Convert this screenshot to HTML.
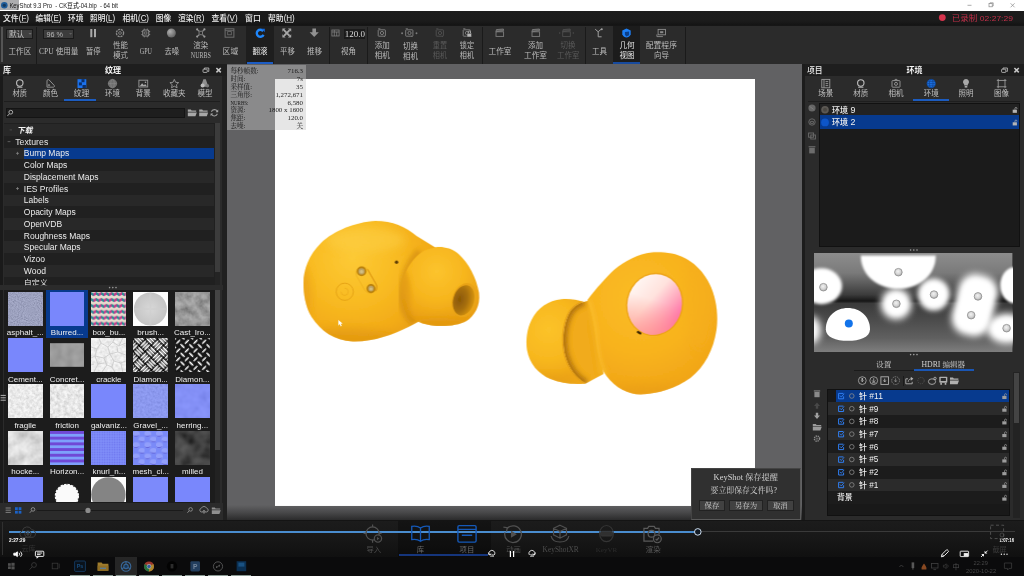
<!DOCTYPE html>
<html lang="zh"><head><meta charset="utf-8"><title>KeyShot 9.3 Pro - CK-04.bip - 64 bit</title>
<style>
html,body{margin:0;padding:0;background:#2b2b2b;}
body{width:1024px;height:576px;overflow:hidden;position:relative;font-family:"Liberation Sans",sans-serif;}
#app{position:absolute;left:0;top:0;width:1024px;height:576px;overflow:hidden;}
#app div{position:absolute;}
#app .thumbgrid div{position:absolute;overflow:hidden;}
#tl span{position:absolute;display:block;color:transparent;white-space:pre;line-height:1;overflow:hidden;}
#ov{position:absolute;left:0;top:0;width:1024px;height:576px;pointer-events:none;filter:blur(0.35px);}
</style></head>
<body>
<div id="app">
<div class="titlebar" style="left:0px;top:0px;width:1024px;height:10.6px;background:#ffffff;"></div>
<div style="left:0px;top:0px;width:18.6px;height:10.3px;background:rgba(112,114,118,0.58);"></div>
<div class="menubar" style="left:0px;top:10.6px;width:1024px;height:14.2px;background:linear-gradient(to bottom,#1c1c1c 0%,#1b1b1b 70%,#141414 100%);"></div>
<div class="toolbar" style="left:0px;top:24.8px;width:1024px;height:39.6px;background:#2b2b2b;"></div>
<div style="left:0px;top:24.8px;width:1024px;height:0.8px;background:#161616;"></div>
<div style="left:1px;top:27px;width:2px;height:35px;background:#555;"></div>
<div style="left:245.8px;top:25.6px;width:27.8px;height:38.8px;background:#1e1e1e;"></div>
<div style="left:246.6px;top:61.8px;width:26.6px;height:2.2px;background:#1c5cc4;"></div>
<div style="left:612.8px;top:25.6px;width:27.4px;height:38.8px;background:#1c1c1c;"></div>
<div style="left:612.8px;top:61.8px;width:27.4px;height:2.2px;background:#174a9e;"></div>
<div style="left:36px;top:26.5px;width:0.8px;height:37px;background:#1a1a1a;"></div>
<div style="left:329px;top:26.5px;width:0.8px;height:37px;background:#1a1a1a;"></div>
<div style="left:367px;top:26.5px;width:0.8px;height:37px;background:#1a1a1a;"></div>
<div style="left:481.8px;top:26.5px;width:0.8px;height:37px;background:#1a1a1a;"></div>
<div style="left:584.5px;top:26.5px;width:0.8px;height:37px;background:#1a1a1a;"></div>
<div style="left:684.5px;top:26.5px;width:0.8px;height:37px;background:#1a1a1a;"></div>
<div style="left:6.2px;top:28.6px;width:27.2px;height:10.4px;background:#404040;border:0.6px solid #1a1a1a;box-sizing:border-box;"></div>
<div style="left:42.6px;top:28.6px;width:31.4px;height:10.4px;background:#3c3c3c;border:0.6px solid #1a1a1a;box-sizing:border-box;"></div>
<div style="left:343.6px;top:28.6px;width:21.6px;height:10.4px;background:#1a1a1a;"></div>
<div style="left:0px;top:63.7px;width:1024px;height:0.9px;background:#1c1c1c;"></div>
<div class="panel-left" style="left:0px;top:64.4px;width:226.6px;height:455.6px;background:#2b2b2b;"></div>
<div style="left:0px;top:64.4px;width:3px;height:455.6px;background:#1a1a1a;"></div>
<div style="left:222.4px;top:64.4px;width:4.2px;height:455.6px;background:#202020;"></div>
<div class="panel-head" style="left:0px;top:64.4px;width:226.6px;height:11.8px;background:#1e1e1e;"></div>
<div style="left:4px;top:100.6px;width:216px;height:0.7px;background:#1e1e1e;"></div>
<div style="left:64.4px;top:99px;width:31.8px;height:1.6px;background:#1c5cc0;"></div>
<div style="left:5.6px;top:107.6px;width:179.6px;height:10.6px;background:#1e1e1e;border:0.6px solid #141414;box-sizing:border-box;"></div>
<div class="tree" style="left:4.4px;top:122.6px;width:216px;height:162.6px;background:#202020;"></div>
<div style="left:4.4px;top:124.15px;width:210px;height:11.72px;background:#282828;"></div>
<div style="left:4.4px;top:135.88px;width:210px;height:11.72px;background:#202020;"></div>
<div style="left:4.4px;top:147.6px;width:210px;height:11.72px;background:#282828;"></div>
<div style="left:23.6px;top:147.6px;width:190.2px;height:11.72px;background:#073a8e;"></div>
<div style="left:4.4px;top:159.32px;width:210px;height:11.72px;background:#202020;"></div>
<div style="left:4.4px;top:171.05px;width:210px;height:11.72px;background:#282828;"></div>
<div style="left:4.4px;top:182.78px;width:210px;height:11.72px;background:#202020;"></div>
<div style="left:4.4px;top:194.5px;width:210px;height:11.72px;background:#282828;"></div>
<div style="left:4.4px;top:206.23px;width:210px;height:11.72px;background:#202020;"></div>
<div style="left:4.4px;top:217.95px;width:210px;height:11.72px;background:#282828;"></div>
<div style="left:4.4px;top:229.68px;width:210px;height:11.72px;background:#202020;"></div>
<div style="left:4.4px;top:241.4px;width:210px;height:11.72px;background:#282828;"></div>
<div style="left:4.4px;top:253.12px;width:210px;height:11.72px;background:#202020;"></div>
<div style="left:4.4px;top:264.85px;width:210px;height:11.72px;background:#282828;"></div>
<div style="left:4.4px;top:276.57px;width:210px;height:8.43px;background:#202020;"></div>
<div style="left:214.6px;top:123px;width:5.4px;height:162px;background:#242424;"></div>
<div style="left:215px;top:123.4px;width:4.6px;height:149px;background:#3c3c3c;"></div>
<div style="left:0px;top:285.2px;width:222.6px;height:5px;background:#2b2b2b;"></div>
<div class="thumbs" style="left:4.4px;top:289.6px;width:216px;height:213.6px;background:#1c1c1c;overflow:hidden;"></div>
<div style="left:214.6px;top:290px;width:5.4px;height:213px;background:#222;"></div>
<div style="left:215px;top:290.4px;width:4.6px;height:159.6px;background:#444;"></div>
<div style="left:46px;top:290px;width:42.4px;height:48px;background:#073a8e;"></div>
<div class="thumbgrid" style="left:4.4px;top:289.6px;width:210px;height:212.5px;overflow:hidden;"><div style="left:3.5px;top:2.1px;width:34.8px;height:34px;"><svg width="34.8" height="34" viewBox="0 0 35 34" preserveAspectRatio="none" style="display:block;background:#8c93bd"><filter id="nzA" x="0" y="0" width="100%" height="100%"><feTurbulence type="fractalNoise" baseFrequency="0.95" numOctaves="2" seed="4" result="t"/><feColorMatrix in="t" type="matrix" values="1.1 0 0 0 0  1.1 0 0 0 0  1.1 0 0 0 0  0 0 0 0 1"/></filter><rect x="0" y="0" width="35" height="34" fill="#8c93bd"/><rect x="0" y="0" width="35" height="34" filter="url(#nzA)" opacity="0.3"/></svg></div><div style="left:45.3px;top:2.1px;width:34.8px;height:34px;background:#7987fc;"></div><div style="left:87.1px;top:2.1px;width:34.8px;height:34px;"><svg width="34.8" height="34" viewBox="0 0 35 34" preserveAspectRatio="none" style="display:block;background:#cbb"><pattern id="pbox" width="7" height="8" patternUnits="userSpaceOnUse" patternTransform="scale(0.74)"><rect width="7" height="8" fill="#d8c9c0"/><path d="M0 0l3.5 2v4L0 4z" fill="#2d8a94"/><path d="M3.5 2L7 0v4L3.5 6z" fill="#c43a8a"/><path d="M0 4l3.5 2L7 4v4H0z" fill="#e9dccf"/></pattern><rect width="35" height="34" fill="url(#pbox)"/></svg></div><div style="left:128.9px;top:2.1px;width:34.8px;height:34px;"><svg width="34.8" height="34" viewBox="0 0 35 34" preserveAspectRatio="none" style="display:block;background:#fdfdfd"><defs><radialGradient id="gbr"><stop offset="0" stop-color="#d8d8d8"/><stop offset="1" stop-color="#c4c4c4"/></radialGradient></defs><circle cx="17.5" cy="17" r="16.6" fill="url(#gbr)"/><path d="M17.5 17L17.5 0.4M17.5 17L34 17M17.5 17L1 17M17.5 17V33.6" stroke="#cfcfcf" stroke-width="2" opacity="0.6"/></svg></div><div style="left:170.6px;top:2.1px;width:34.8px;height:34px;"><svg width="34.8" height="34" viewBox="0 0 35 34" preserveAspectRatio="none" style="display:block;background:#767676"><filter id="nzC" x="0" y="0" width="100%" height="100%"><feTurbulence type="fractalNoise" baseFrequency="0.13" numOctaves="3" seed="2" result="t"/><feColorMatrix in="t" type="matrix" values="0.8 0 0 0 0.06  0.8 0 0 0 0.06  0.8 0 0 0 0.06  0 0 0 0 1"/></filter><rect x="0" y="0" width="35" height="34" fill="#767676"/><rect x="0" y="0" width="35" height="34" filter="url(#nzC)" opacity="0.55"/></svg></div><div style="left:3.5px;top:48.5px;width:34.8px;height:34px;background:#7987fc;"></div><div style="left:45.3px;top:48.5px;width:34.8px;height:34px;"><svg width="34.8" height="34" viewBox="0 0 35 34" preserveAspectRatio="none" style="display:block;background:#1c1c1c"><filter id="nzK" x="0" y="0" width="100%" height="100%"><feTurbulence type="fractalNoise" baseFrequency="0.09" numOctaves="2" seed="6" result="t"/><feColorMatrix in="t" type="matrix" values="0.5 0 0 0 0.23  0.5 0 0 0 0.23  0.5 0 0 0 0.23  0 0 0 0 1"/></filter><rect x="0" y="5.4" width="35" height="23.2" fill="#828282"/><rect x="0" y="5.4" width="35" height="23.2" filter="url(#nzK)" opacity="0.45"/></svg></div><div style="left:87.1px;top:48.5px;width:34.8px;height:34px;"><svg width="34.8" height="34" viewBox="0 0 35 34" preserveAspectRatio="none" style="display:block;background:#f4f4f4"><filter id="nzX" x="0" y="0" width="100%" height="100%"><feTurbulence type="fractalNoise" baseFrequency="0.3" numOctaves="2" seed="8" result="t"/><feColorMatrix in="t" type="matrix" values="1 0 0 0 0.25  1 0 0 0 0.25  1 0 0 0 0.25  0 0 0 0 1"/></filter><rect x="0" y="0" width="35" height="34" fill="#f4f4f4"/><rect x="0" y="0" width="35" height="34" filter="url(#nzX)" opacity="0.35"/><path d="M0 9l6 2l4 -6l7 4l5 -5l6 4l7 -3M6 11l-2 7l-4 2M10 5l-2 -5M17 9l2 7l-6 4l-9 -2M19 16l8 -2l8 3M13 20l3 7l-5 7M4 18l3 8l-4 8M19 16l4 7l7 2l5 -2M23 23l-2 6l3 5M16 27l5 2M27 14l-1 -6M30 25l2 9M7 26l6 -1M22 4l2 -4M28 8l4 -8M0 27l3 -1" stroke="#c2c2c2" stroke-width="0.7" fill="none"/></svg></div><div style="left:128.9px;top:48.5px;width:34.8px;height:34px;"><svg width="34.8" height="34" viewBox="0 0 35 34" preserveAspectRatio="none" style="display:block;background:#080808"><pattern id="pd1" width="17.4" height="17.4" patternUnits="userSpaceOnUse" patternTransform="rotate(45 17 17) translate(2.5 0.5)"><rect width="18" height="18" fill="#080808"/><g fill="#ffffff"><ellipse cx="4.35" cy="1.65" rx="4.1" ry="0.98"/><ellipse cx="4.35" cy="4.35" rx="4.1" ry="0.98"/><ellipse cx="4.35" cy="7.05" rx="4.1" ry="0.98"/><ellipse cx="10.35" cy="4.35" rx="0.98" ry="4.1"/><ellipse cx="13.05" cy="4.35" rx="0.98" ry="4.1"/><ellipse cx="15.75" cy="4.35" rx="0.98" ry="4.1"/><ellipse cx="13.05" cy="10.35" rx="4.1" ry="0.98"/><ellipse cx="13.05" cy="13.05" rx="4.1" ry="0.98"/><ellipse cx="13.05" cy="15.75" rx="4.1" ry="0.98"/><ellipse cx="1.65" cy="13.05" rx="0.98" ry="4.1"/><ellipse cx="4.35" cy="13.05" rx="0.98" ry="4.1"/><ellipse cx="7.05" cy="13.05" rx="0.98" ry="4.1"/></g></pattern><rect width="35" height="34" fill="url(#pd1)"/></svg></div><div style="left:170.6px;top:48.5px;width:34.8px;height:34px;"><svg width="34.8" height="34" viewBox="0 0 35 34" preserveAspectRatio="none" style="display:block;background:#161616"><pattern id="pd2" width="12.3" height="12.3" patternUnits="userSpaceOnUse" patternTransform="rotate(45 17 17) translate(1 2)"><rect width="13" height="13" fill="#161616"/><g fill="#f2f2f2"><ellipse cx="3.08" cy="3.08" rx="3.1" ry="0.85"/><ellipse cx="9.23" cy="9.23" rx="3.1" ry="0.85"/><ellipse cx="9.23" cy="3.08" rx="0.85" ry="3.1"/><ellipse cx="3.08" cy="9.23" rx="0.85" ry="3.1"/></g></pattern><rect width="35" height="34" fill="url(#pd2)"/></svg></div><div style="left:3.5px;top:94.8px;width:34.8px;height:34px;"><svg width="34.8" height="34" viewBox="0 0 35 34" preserveAspectRatio="none" style="display:block;background:#f0f0f0"><filter id="nzF" x="0" y="0" width="100%" height="100%"><feTurbulence type="fractalNoise" baseFrequency="0.32" numOctaves="3" seed="7" result="t"/><feColorMatrix in="t" type="matrix" values="0.9 0 0 0 0.33  0.9 0 0 0 0.33  0.9 0 0 0 0.33  0 0 0 0 1"/></filter><rect x="0" y="0" width="35" height="34" fill="#f0f0f0"/><rect x="0" y="0" width="35" height="34" filter="url(#nzF)" opacity="0.5"/></svg></div><div style="left:45.3px;top:94.8px;width:34.8px;height:34px;"><svg width="34.8" height="34" viewBox="0 0 35 34" preserveAspectRatio="none" style="display:block;background:#eeeeee"><filter id="nzR" x="0" y="0" width="100%" height="100%"><feTurbulence type="fractalNoise" baseFrequency="0.28" numOctaves="3" seed="12" result="t"/><feColorMatrix in="t" type="matrix" values="1 0 0 0 0.26  1 0 0 0 0.26  1 0 0 0 0.26  0 0 0 0 1"/></filter><rect x="0" y="0" width="35" height="34" fill="#eeeeee"/><rect x="0" y="0" width="35" height="34" filter="url(#nzR)" opacity="0.5"/></svg></div><div style="left:87.1px;top:94.8px;width:34.8px;height:34px;background:#7987fc;"></div><div style="left:128.9px;top:94.8px;width:34.8px;height:34px;"><svg width="34.8" height="34" viewBox="0 0 35 34" preserveAspectRatio="none" style="display:block;background:#7c8cf8"><filter id="nzG" x="0" y="0" width="100%" height="100%"><feTurbulence type="fractalNoise" baseFrequency="0.4" numOctaves="2" seed="5" result="t"/><feColorMatrix in="t" type="matrix" values="1 0 0 0 0.1  1 0 0 0 0.1  1 0 0 0 0.1  0 0 0 0 1"/></filter><rect x="0" y="0" width="35" height="34" fill="#7c8cf8"/><rect x="0" y="0" width="35" height="34" filter="url(#nzG)" opacity="0.2"/></svg></div><div style="left:170.6px;top:94.8px;width:34.8px;height:34px;"><svg width="34.8" height="34" viewBox="0 0 35 34" preserveAspectRatio="none" style="display:block;background:#7987fc"><filter id="nzH" x="0" y="0" width="100%" height="100%"><feTurbulence type="fractalNoise" baseFrequency="0.12" numOctaves="2" seed="9" result="t"/><feColorMatrix in="t" type="matrix" values="1.2 0 0 0 0  1.2 0 0 0 0  1.2 0 0 0 0  0 0 0 0 1"/></filter><rect x="0" y="0" width="35" height="34" fill="#7987fc"/><rect x="0" y="0" width="35" height="34" filter="url(#nzH)" opacity="0.12"/></svg></div><div style="left:3.5px;top:141.2px;width:34.8px;height:34px;"><svg width="34.8" height="34" viewBox="0 0 35 34" preserveAspectRatio="none" style="display:block;background:#d6d6d6"><filter id="nzO" x="0" y="0" width="100%" height="100%"><feTurbulence type="fractalNoise" baseFrequency="0.085" numOctaves="3" seed="11" result="t"/><feColorMatrix in="t" type="matrix" values="0.9 0 0 0 0.27  0.9 0 0 0 0.27  0.9 0 0 0 0.27  0 0 0 0 1"/></filter><rect x="0" y="0" width="35" height="34" fill="#d6d6d6"/><rect x="0" y="0" width="35" height="34" filter="url(#nzO)" opacity="0.6"/></svg></div><div style="left:45.3px;top:141.2px;width:34.8px;height:34px;"><svg width="34.8" height="34" viewBox="0 0 35 34" preserveAspectRatio="none" style="display:block;background:#7ea0fb"><rect x="0" y="0" width="35" height="2.9" fill="#7048d6"/><rect x="0" y="5.7" width="35" height="2.9" fill="#7048d6"/><rect x="0" y="11.4" width="35" height="2.9" fill="#7048d6"/><rect x="0" y="17.1" width="35" height="2.9" fill="#7048d6"/><rect x="0" y="22.8" width="35" height="2.9" fill="#7048d6"/><rect x="0" y="28.5" width="35" height="2.9" fill="#7048d6"/></svg></div><div style="left:87.1px;top:141.2px;width:34.8px;height:34px;"><svg width="34.8" height="34" viewBox="0 0 35 34" preserveAspectRatio="none" style="display:block;background:#7686f5"><pattern id="pkn" width="2.5" height="2.5" patternUnits="userSpaceOnUse"><rect width="2.5" height="2.5" fill="#8494fb"/><rect x="0.5" y="0.5" width="1.6" height="1.6" fill="#6c74ee"/></pattern><rect width="35" height="34" fill="url(#pkn)"/></svg></div><div style="left:128.9px;top:141.2px;width:34.8px;height:34px;"><svg width="34.8" height="34" viewBox="0 0 35 34" preserveAspectRatio="none" style="display:block;background:#7a8af8"><pattern id="pme" width="11.6" height="11.3" patternUnits="userSpaceOnUse"><rect width="12" height="12" fill="#7a8af8"/><ellipse cx="3.2" cy="3" rx="3.6" ry="3" fill="#929ffb"/><path d="M-0.2 3.8a3.6 3 0 0 0 6.8 0a5 3 0 0 1 -6.8 0" fill="#6468dc"/><ellipse cx="9" cy="8.6" rx="3.6" ry="3" fill="#929ffb"/><path d="M5.6 9.4a3.6 3 0 0 0 6.8 0a5 3 0 0 1 -6.8 0" fill="#6468dc"/></pattern><rect width="35" height="34" fill="url(#pme)"/></svg></div><div style="left:170.6px;top:141.2px;width:34.8px;height:34px;"><svg width="34.8" height="34" viewBox="0 0 35 34" preserveAspectRatio="none" style="display:block;background:#1a1a1a"><filter id="nzM" x="0" y="0" width="100%" height="100%"><feTurbulence type="fractalNoise" baseFrequency="0.08" numOctaves="2" seed="3" result="t"/><feColorMatrix in="t" type="matrix" values="0.2 0 0 0 -0.03  0.2 0 0 0 -0.03  0.2 0 0 0 -0.03  0 0 0 0 1"/></filter><rect x="0" y="0" width="35" height="34" fill="#1a1a1a"/><rect x="0" y="0" width="35" height="34" filter="url(#nzM)" opacity="0.8"/></svg></div><div style="left:3.5px;top:187.6px;width:34.8px;height:34px;background:#7785fa;"></div><div style="left:45.3px;top:187.6px;width:34.8px;height:34px;"><svg width="34.8" height="34" viewBox="0 0 35 34" preserveAspectRatio="none" style="display:block;background:#1c1c1c"><circle cx="17" cy="19" r="11.4" fill="#fafafa" stroke="#fafafa" stroke-width="1.6" stroke-dasharray="2.4 1.2"/></svg></div><div style="left:87.1px;top:187.6px;width:34.8px;height:34px;"><svg width="34.8" height="34" viewBox="0 0 35 34" preserveAspectRatio="none" style="display:block;background:#fcfcfc"><circle cx="17.5" cy="17.6" r="17.3" fill="#848484"/></svg></div><div style="left:128.9px;top:187.6px;width:34.8px;height:34px;background:#7c8afb;"></div><div style="left:170.6px;top:187.6px;width:34.8px;height:34px;background:#7987fc;"></div></div>
<div style="left:0px;top:503.2px;width:222.6px;height:16.8px;background:#2b2b2b;"></div>
<div style="left:37px;top:510px;width:146px;height:0.8px;background:#1a1a1a;"></div>
<div class="viewport" style="left:226.6px;top:64.4px;width:575.4px;height:455.6px;background:#616163;"></div>
<div class="canvas" style="left:274.5px;top:79.1px;width:480.3px;height:426.9px;background:#fff;overflow:hidden;">
<svg width="480.3" height="426.9" viewBox="274.5 79.1 480.3 426.9" style="display:block">
<defs>
 <radialGradient id="gL1" gradientUnits="userSpaceOnUse" cx="352" cy="258" r="95">
  <stop offset="0" stop-color="#fdca36"/><stop offset="0.45" stop-color="#f9bc23"/><stop offset="0.8" stop-color="#f3ac18"/><stop offset="1" stop-color="#ea9f13"/></radialGradient>
 <radialGradient id="gL2" gradientUnits="userSpaceOnUse" cx="436" cy="272" r="52">
  <stop offset="0" stop-color="#fcc42e"/><stop offset="0.55" stop-color="#f7b61e"/><stop offset="1" stop-color="#ea9f13"/></radialGradient>
 <radialGradient id="gLh" cx="30%" cy="52%" r="75%">
  <stop offset="0" stop-color="#8a5806"/><stop offset="0.5" stop-color="#a8700a"/><stop offset="0.85" stop-color="#cf8e0e"/><stop offset="1" stop-color="#dc9a12"/></radialGradient>
 <radialGradient id="gR1" gradientUnits="userSpaceOnUse" cx="640" cy="300" r="100">
  <stop offset="0" stop-color="#fbbd25"/><stop offset="0.55" stop-color="#f8b31e"/><stop offset="1" stop-color="#f0a316"/></radialGradient>
 <radialGradient id="gR2" gradientUnits="userSpaceOnUse" cx="548" cy="330" r="50">
  <stop offset="0" stop-color="#fcc32a"/><stop offset="0.6" stop-color="#f8b81f"/><stop offset="1" stop-color="#efa716"/></radialGradient>
 <linearGradient id="gPink" gradientUnits="userSpaceOnUse" x1="630" y1="288" x2="683" y2="318">
  <stop offset="0" stop-color="#fff7f3"/><stop offset="0.38" stop-color="#ffe3de"/><stop offset="0.7" stop-color="#ffa2bb"/><stop offset="1" stop-color="#ff5ca4"/></linearGradient>
 <linearGradient id="gPink2" gradientUnits="userSpaceOnUse" x1="650" y1="275" x2="645" y2="336">
  <stop offset="0.4" stop-color="#ffa08a" stop-opacity="0"/><stop offset="1" stop-color="#ff9a90" stop-opacity="0.75"/></linearGradient>
 <linearGradient id="gFe" gradientUnits="userSpaceOnUse" x1="399" y1="300" x2="414" y2="296"><stop offset="0" stop-color="#000"/><stop offset="1" stop-color="#fff"/></linearGradient>
 <mask id="mLT" maskUnits="userSpaceOnUse" x="380" y="230" width="120" height="120"><rect x="380" y="230" width="120" height="120" fill="url(#gFe)"/></mask>
 <filter id="bl1" x="-20%" y="-20%" width="140%" height="140%"><feGaussianBlur stdDeviation="2.2"/></filter>
 <filter id="bl2" x="-20%" y="-20%" width="140%" height="140%"><feGaussianBlur stdDeviation="0.5"/></filter>
 <filter id="bl3" x="-30%" y="-30%" width="160%" height="160%"><feGaussianBlur stdDeviation="4"/></filter>
 <clipPath id="cpLB"><path id="pLB" d="M303 283C303 270 308 255 320.5 243C333 231 355 222 375 221C392 221 405 227 416 236L442 252L446 300C436 312 422 320 408 327C392 335 372 342 352 341.4C334 340.6 320 331 311 317C305 307 303 295 303 283Z"/></clipPath>
 <clipPath id="cpLT"><path id="pLT" d="M432.8 248C438 246 450 247 458 254C468 263 476 278 478.5 293C480 306 474 316 466 321C455 327 435 327.5 422 323.5C410 319.5 402 310 400.5 296C399.5 280 408 262 420 253C424 250 428 249 432.8 248Z"/></clipPath>
 <clipPath id="cpRB"><path id="pRB" d="M587 300C596 288 606 277 613.5 270C624 261 638 254 651 252.5C656 252 660 252.3 664 252.6C684 254 700 266 709 284C716 298 718 315 716 330C713 350 704 367 690 378C676 388 658 394 640 394.5C628 394.5 615 388 606 376C600 368 597 355 595.5 342C594 325 591 312 587 300Z"/></clipPath>
 <clipPath id="cpRT"><path id="pRT" d="M583.5 302C576 299.5 568 298.6 561 299.3C548 300.5 537 308 531 320C526.5 329 525 340 526.5 350C529 364 538 374 550 379C561 383.5 574 385 585.4 383.5C575 378 568 368 564.5 355C561 340 563 322 570 311C574 306 578 303.5 583.5 302Z"/></clipPath><path id="pRN" d="M583.5 302C578 303.5 574 306 570 311C563 322 561 340 564.5 355C568 368 575 378 585.4 383.5L603 374L598 340L590 300Z"/>
</defs>
<g filter="url(#bl2)">
 <!-- left earbud body -->
 <use href="#pLB" fill="url(#gL1)"/>
 <g clip-path="url(#cpLB)">
  <ellipse cx="345" cy="345" rx="60" ry="16" fill="#dc9210" opacity="0.55" filter="url(#bl3)"/>
  <ellipse cx="300" cy="295" rx="10" ry="30" fill="#e79c12" opacity="0.6" filter="url(#bl3)"/>
  <path d="M420 252C409 263 402.5 280 402.5 296C403 308 407 317 415 322" fill="none" stroke="#cc860c" stroke-width="10" opacity="0.55" filter="url(#bl1)"/>
  <ellipse cx="365" cy="240" rx="40" ry="12" fill="#fdd04a" opacity="0.5" filter="url(#bl3)"/>
 </g>
 <!-- sensor capsule -->
 <g transform="rotate(60 365.7 280)"><rect x="351.4" y="273.6" width="28.6" height="12.8" rx="6.4" fill="none" stroke="#e29c12" stroke-width="0.8" opacity="0.45"/><path d="M357 273.6h17a6.4 6.4 0 0 1 6 4" fill="none" stroke="#dc9510" stroke-width="1" opacity="0.9"/></g>
 <circle cx="361" cy="271.4" r="4" fill="#bca264" stroke="#b9800c" stroke-width="1.7"/><circle cx="361" cy="271.8" r="1.8" fill="#d4c084"/>
 <circle cx="370.4" cy="288.6" r="3.7" fill="#bca264" stroke="#b9800c" stroke-width="1.7"/><circle cx="370.4" cy="289" r="1.6" fill="#d4c084"/>
 <circle cx="344.2" cy="291.8" r="8.6" fill="none" stroke="#e3a014" stroke-width="0.9"/>
 <path d="M340.5 291.8a3.6 3.6 0 1 0 3.6 -3.6" fill="none" stroke="#eaa818" stroke-width="0.7"/>
 <circle cx="396" cy="262.3" r="1.7" fill="#5e3d06"/>
 <!-- left tip -->
 <g mask="url(#mLT)"><use href="#pLT" fill="url(#gL2)"/></g>
 <g clip-path="url(#cpLT)" mask="url(#mLT)">
  <ellipse cx="438" cy="330" rx="36" ry="12" fill="#df9510" opacity="0.6" filter="url(#bl3)"/>
  <ellipse cx="402" cy="296" rx="8" ry="26" fill="#dc9210" opacity="0.6" filter="url(#bl1)"/>
 </g>
 <g transform="rotate(16 464 300.2)"><ellipse cx="464" cy="300.2" rx="12.4" ry="17.4" fill="#eaa416"/><ellipse cx="463.2" cy="300.6" rx="10.4" ry="15.4" fill="url(#gLh)"/></g>
 <!-- right earbud tip -->
 <use href="#pRN" fill="#f1ab1a"/>
 <clipPath id="cpRN"><use href="#pRN"/></clipPath>
 <g clip-path="url(#cpRN)"><path d="M583.5 302C578 303.5 574 306 570 311C563 322 561 340 564.5 355C568 368 575 378 585.4 383.5" fill="none" stroke="#a86c08" stroke-width="8" opacity="0.85" filter="url(#bl1)"/>
 <path d="M590 300L598 340L603 374" fill="none" stroke="#f9ba24" stroke-width="8" opacity="0.6" filter="url(#bl1)"/></g>
 <use href="#pRT" fill="url(#gR2)"/>
 <g clip-path="url(#cpRT)">
  <ellipse cx="545" cy="384" rx="30" ry="9" fill="#e59e14" opacity="0.55" filter="url(#bl3)"/>
  <path d="M585.4 383.5C575 378 568 368 564.5 355C561 340 563 322 570 311C574 306 578 303.5 583.5 302" fill="none" stroke="#e39c13" stroke-width="2.4" opacity="0.9"/>
 </g>
 <!-- right earbud body -->
 <use href="#pRB" fill="url(#gR1)"/>
 <g clip-path="url(#cpRB)">
  <path d="M587 300C591 312 594 325 595.5 342C597 355 600 368 606 376" fill="none" stroke="#fdc63a" stroke-width="5" opacity="0.55" filter="url(#bl1)"/>
  <ellipse cx="650" cy="400" rx="60" ry="14" fill="#e89e14" opacity="0.6" filter="url(#bl3)"/>
  <ellipse cx="700" cy="300" rx="14" ry="50" fill="#f6ae1c" opacity="0.5" filter="url(#bl3)"/>
 </g>
 <!-- pink touch pad -->
 <g transform="rotate(12 654.2 304.4)">
  <ellipse cx="654.2" cy="304.4" rx="28.6" ry="31.8" fill="#eea417"/>
  <ellipse cx="654.2" cy="304.4" rx="27.2" ry="30.4" fill="url(#gPink)"/>
  <ellipse cx="654.2" cy="304.4" rx="27.2" ry="30.4" fill="url(#gPink2)"/>
 </g>
 <g transform="rotate(28 638.6 332.6)"><rect x="636.2" y="331.6" width="5" height="2.2" rx="1" fill="#3c2604"/></g>
</g>
<path d="M338 320.4l0 5l1.3 -1.2l1 2.1l0.8 -0.4l-1 -2.1l1.8 -0.1z" fill="#fff" stroke="#f0f0f0" stroke-width="0.3"/>
</svg></div>
<div style="left:226.6px;top:505px;width:575.4px;height:15px;background:linear-gradient(to bottom, rgba(30,30,30,0) 0%, rgba(26,26,26,0.35) 50%, rgba(22,22,22,0.72) 100%);"></div>
<div class="stats" style="left:227px;top:64.7px;width:78.8px;height:65px;background:rgba(196,196,196,0.42);"></div>
<div class="dialog" style="left:691.4px;top:468.4px;width:109.8px;height:51.2px;background:#303030;border:0.8px solid #5a5a5a;border-top-color:#444;border-left-color:#444;box-sizing:border-box;"></div>
<div style="left:698.6px;top:500px;width:26.6px;height:11.4px;background:#414141;border:0.6px solid #222;box-sizing:border-box;"></div>
<div style="left:729.2px;top:500px;width:33.8px;height:11.4px;background:#414141;border:0.6px solid #222;box-sizing:border-box;"></div>
<div style="left:767px;top:500px;width:26.6px;height:11.4px;background:#414141;border:0.6px solid #222;box-sizing:border-box;"></div>
<div class="panel-right" style="left:802px;top:64.4px;width:222px;height:455.6px;background:#2b2b2b;"></div>
<div style="left:802px;top:64.4px;width:3px;height:455.6px;background:#1c1c1c;"></div>
<div class="panel-head" style="left:804.6px;top:64.4px;width:219.4px;height:11.8px;background:#1e1e1e;"></div>
<div style="left:808px;top:100.6px;width:212px;height:0.7px;background:#1e1e1e;"></div>
<div style="left:912.6px;top:99px;width:36px;height:1.6px;background:#1c5cc0;"></div>
<div style="left:819.2px;top:103px;width:200.6px;height:144.4px;background:#1b1b1b;border:0.6px solid #111;box-sizing:border-box;"></div>
<div style="left:819.8px;top:103.6px;width:199.4px;height:11.8px;background:#222;"></div>
<div style="left:819.8px;top:115.4px;width:199.4px;height:13.6px;background:#073a8e;"></div>
<div class="hdri" style="left:814.2px;top:252.8px;width:198.4px;height:99px;overflow:hidden;"><svg width="198.4" height="99" viewBox="814.2 252.8 198.4 99" style="display:block">
<defs>
 <linearGradient id="hbg" x1="0" y1="0" x2="0" y2="1">
  <stop offset="0" stop-color="#8d8d8d"/><stop offset="0.2" stop-color="#7a7a7a"/><stop offset="0.42" stop-color="#3c3c3c"/><stop offset="0.485" stop-color="#161616"/>
  <stop offset="0.51" stop-color="#3a3a3a"/><stop offset="0.7" stop-color="#4e4e4e"/><stop offset="0.86" stop-color="#606060"/><stop offset="1" stop-color="#7e7e7e"/></linearGradient>
 <filter id="hb1" x="-30%" y="-30%" width="160%" height="160%"><feGaussianBlur stdDeviation="2.4"/></filter>
 <filter id="hb4" x="-30%" y="-30%" width="160%" height="160%"><feGaussianBlur stdDeviation="0.45"/></filter>
 <filter id="hb5" x="-30%" y="-30%" width="160%" height="160%"><feGaussianBlur stdDeviation="1.6"/></filter>
 <filter id="hb2" x="-30%" y="-30%" width="160%" height="160%"><feGaussianBlur stdDeviation="0.8"/></filter>
 <filter id="hb3" x="-30%" y="-30%" width="160%" height="160%"><feGaussianBlur stdDeviation="3.6"/></filter>
 <radialGradient id="pin" cx="45%" cy="40%" r="60%"><stop offset="0" stop-color="#f2f2f2"/><stop offset="0.6" stop-color="#d4d4d4"/><stop offset="1" stop-color="#aaa"/></radialGradient>
</defs>
<rect x="814.2" y="252.8" width="198.4" height="99" fill="url(#hbg)"/>
<g fill="#fff">
 <ellipse cx="821.6" cy="286" rx="20.6" ry="18" filter="url(#hb5)"/>
 <path d="M861 255.2H936C936 276 918 288.5 898.4 288.5C879 288.5 861 276 861 255.2Z" filter="url(#hb2)"/>
 <circle cx="896.4" cy="303.8" r="15.5" filter="url(#hb3)"/>
 <circle cx="896.4" cy="303.8" r="10" filter="url(#hb1)"/>
 <circle cx="934" cy="294.4" r="16" filter="url(#hb1)"/>
 <g transform="rotate(14 975 304.6)"><rect x="955" y="274" width="40" height="62" rx="17" filter="url(#hb3)"/><rect x="960" y="280" width="30" height="50" rx="13" filter="url(#hb1)"/></g>
 <ellipse cx="1015" cy="285" rx="14.5" ry="18" filter="url(#hb2)"/>
 <ellipse cx="1007" cy="328.4" rx="20" ry="15" filter="url(#hb3)"/>
 <ellipse cx="1007" cy="328.4" rx="13" ry="9.5" filter="url(#hb1)"/>
 <ellipse cx="811" cy="330" rx="10" ry="14" filter="url(#hb3)"/>
 <path d="M826 329C826 316 836 307.8 848 307.8C860 307.8 870.2 316 870.2 329C870.2 337 860 340.6 848 340.6C836 340.6 826 337 826 329Z" filter="url(#hb4)"/>
</g>
<g fill="url(#pin)" stroke="#8e8e8e" stroke-width="0.8">
 <circle cx="823.6" cy="287" r="3.8"/><circle cx="898.6" cy="272" r="3.8"/><circle cx="896.6" cy="303.6" r="3.8"/><circle cx="934.2" cy="294.4" r="3.8"/>
 <circle cx="978.2" cy="296.2" r="3.8"/><circle cx="971.4" cy="315" r="3.8"/><circle cx="1006.8" cy="328" r="3.8"/>
</g>
<circle cx="849" cy="323.4" r="4" fill="#1273ea"/>
</svg></div>
<div style="left:853.6px;top:369.8px;width:60.4px;height:0.7px;background:#1a1a1a;"></div>
<div style="left:913.8px;top:369.4px;width:60.2px;height:1.2px;background:#1a56b4;"></div>
<div style="left:902.6px;top:375.6px;width:0.7px;height:10.6px;background:#1a1a1a;"></div>
<div style="left:827.2px;top:388.8px;width:183px;height:127.6px;background:#191919;border:0.6px solid #111;box-sizing:border-box;"></div>
<div style="left:836px;top:389.65px;width:173.4px;height:12.7px;background:#073a8e;"></div>
<div style="left:828px;top:402.35px;width:181.4px;height:12.7px;background:#2b2b2b;"></div>
<div style="left:828px;top:415.05px;width:181.4px;height:12.7px;background:#1c1c1c;"></div>
<div style="left:828px;top:427.75px;width:181.4px;height:12.7px;background:#2b2b2b;"></div>
<div style="left:828px;top:440.45px;width:181.4px;height:12.7px;background:#1c1c1c;"></div>
<div style="left:828px;top:453.15px;width:181.4px;height:12.7px;background:#2b2b2b;"></div>
<div style="left:828px;top:465.85px;width:181.4px;height:12.7px;background:#1c1c1c;"></div>
<div style="left:828px;top:478.55px;width:181.4px;height:12.7px;background:#2b2b2b;"></div>
<div style="left:828px;top:491.25px;width:181.4px;height:12.7px;background:#1c1c1c;"></div>
<div style="left:1013.2px;top:372px;width:6.4px;height:146px;background:#232323;"></div>
<div style="left:1013.6px;top:373px;width:5.6px;height:50.4px;background:#444;"></div>
<div class="bottombar" style="left:0px;top:520px;width:1024px;height:37.4px;background:linear-gradient(to bottom,#1c1c1c 0%,#181818 45%,#101010 100%);"></div>
<div style="left:0px;top:520px;width:1024px;height:0.8px;background:#141414;"></div>
<div style="left:398px;top:520.8px;width:93.4px;height:36px;background:rgba(0,0,0,0.28);"></div>
<div style="left:1.6px;top:522.4px;width:1.3px;height:33px;background:#303030;"></div>
<div style="left:399px;top:554.2px;width:88.6px;height:1.9px;background:#15357c;"></div>
<div style="left:9px;top:531.3px;width:1006px;height:1.1px;background:#3a3a3a;"></div>
<div style="left:9px;top:530.9px;width:689px;height:1.9px;background:#4a8dcf;"></div>
<div class="taskbar" style="left:0px;top:556.8px;width:1024px;height:19.2px;background:#0b0b0c;"></div>
<div style="left:114.8px;top:556.8px;width:22.6px;height:19.2px;background:#262626;"></div>
<div style="left:70px;top:575.2px;width:20px;height:0.8px;background:#8a9a94;"></div>
<div style="left:93px;top:575.2px;width:20px;height:0.8px;background:#8a9a94;"></div>
<div style="left:116.2px;top:575.2px;width:20px;height:0.8px;background:#8a9a94;"></div>
<div style="left:139.2px;top:575.2px;width:20px;height:0.8px;background:#8a9a94;"></div>
<div style="left:162.2px;top:575.2px;width:20px;height:0.8px;background:#8a9a94;"></div>
<div style="left:185.2px;top:575.2px;width:20px;height:0.8px;background:#8a9a94;"></div>
<div style="left:208.2px;top:575.2px;width:20px;height:0.8px;background:#8a9a94;"></div>
<div style="left:231.2px;top:575.2px;width:20px;height:0.8px;background:#8a9a94;"></div>
<div id="tl" style="left:0;top:0;width:1024px;height:576px;overflow:hidden;"><span style="left:9.4px;top:2.35px;width:109.6px;height:7.3px;font-size:6.3px">KeyShot 9.3 Pro  - CK豆式-04.bip  - 64 bit</span><span style="left:3px;top:14px;width:27px;height:9px;font-size:8px">文件(F)</span><span style="left:35.6px;top:14px;width:26.7px;height:9px;font-size:8px">编辑(E)</span><span style="left:68px;top:14px;width:16.6px;height:9px;font-size:8px">环境</span><span style="left:90px;top:14px;width:26.2px;height:9px;font-size:8px">照明(L)</span><span style="left:122.6px;top:14px;width:27.4px;height:9px;font-size:8px">相机(C)</span><span style="left:155.7px;top:14px;width:16.7px;height:9px;font-size:8px">图像</span><span style="left:178px;top:14px;width:27.5px;height:9px;font-size:8px">渲染(R)</span><span style="left:211.4px;top:14px;width:27.2px;height:9px;font-size:8px">查看(V)</span><span style="left:245px;top:14px;width:16.8px;height:9px;font-size:8px">窗口</span><span style="left:268px;top:14px;width:27.8px;height:9px;font-size:8px">帮助(H)</span><span style="left:951.8px;top:13.8px;width:62.2px;height:9px;font-size:8px">已录制 02:27:29</span><span style="left:9px;top:30px;width:16.2px;height:8.6px;font-size:7.6px">默认</span><span style="left:8.5px;top:47px;width:23.7px;height:8.6px;font-size:7.6px">工作区</span><span style="left:39px;top:47px;width:40.5px;height:8.6px;font-size:7.6px">CPU 使用量</span><span style="left:86px;top:47px;width:15.6px;height:8.6px;font-size:7.6px">暂停</span><span style="left:113.2px;top:41.8px;width:15.8px;height:8.6px;font-size:7.6px">性能</span><span style="left:113.2px;top:51.4px;width:15.8px;height:8.6px;font-size:7.6px">模式</span><span style="left:164.5px;top:47px;width:15.5px;height:8.6px;font-size:7.6px">去噪</span><span style="left:193.3px;top:41.8px;width:16px;height:8.6px;font-size:7.6px">渲染</span><span style="left:222.6px;top:47px;width:16.6px;height:8.6px;font-size:7.6px">区域</span><span style="left:252.4px;top:47px;width:16px;height:8.6px;font-size:7.6px">翻滚</span><span style="left:280px;top:47px;width:15.8px;height:8.6px;font-size:7.6px">平移</span><span style="left:307px;top:47px;width:16.2px;height:8.6px;font-size:7.6px">推移</span><span style="left:341px;top:47px;width:16px;height:8.6px;font-size:7.6px">视角</span><span style="left:374.8px;top:41.8px;width:16px;height:8.6px;font-size:7.6px">添加</span><span style="left:374.8px;top:51.4px;width:16px;height:8.6px;font-size:7.6px">相机</span><span style="left:403px;top:42.6px;width:16px;height:8.6px;font-size:7.6px">切换</span><span style="left:403px;top:52.4px;width:16px;height:8.6px;font-size:7.6px">相机</span><span style="left:432.8px;top:41.8px;width:15.2px;height:8.6px;font-size:7.6px">重置</span><span style="left:432.8px;top:51.4px;width:15.2px;height:8.6px;font-size:7.6px">相机</span><span style="left:459.8px;top:41.8px;width:15.2px;height:8.6px;font-size:7.6px">锁定</span><span style="left:459.8px;top:51.4px;width:15.2px;height:8.6px;font-size:7.6px">相机</span><span style="left:488.5px;top:47px;width:24px;height:8.6px;font-size:7.6px">工作室</span><span style="left:528px;top:41.8px;width:16px;height:8.6px;font-size:7.6px">添加</span><span style="left:524px;top:51.4px;width:24px;height:8.6px;font-size:7.6px">工作室</span><span style="left:560.5px;top:41.8px;width:16px;height:8.6px;font-size:7.6px">切换</span><span style="left:557px;top:51.4px;width:23.5px;height:8.6px;font-size:7.6px">工作室</span><span style="left:592px;top:47px;width:16px;height:8.6px;font-size:7.6px">工具</span><span style="left:619.5px;top:41.8px;width:16px;height:8.6px;font-size:7.6px">几何</span><span style="left:619.5px;top:51.4px;width:16px;height:8.6px;font-size:7.6px">视图</span><span style="left:645.8px;top:41.8px;width:32.2px;height:8.6px;font-size:7.6px">配置程序</span><span style="left:654px;top:51.4px;width:16px;height:8.6px;font-size:7.6px">向导</span><span style="left:3px;top:66.6px;width:9px;height:9px;font-size:8px">库</span><span style="left:105px;top:66.6px;width:17px;height:9px;font-size:8px">纹理</span><span style="left:12.5px;top:89.8px;width:15.5px;height:8.6px;font-size:7.6px">材质</span><span style="left:43px;top:89.8px;width:16px;height:8.6px;font-size:7.6px">颜色</span><span style="left:73.8px;top:89.8px;width:16.6px;height:8.6px;font-size:7.6px">纹理</span><span style="left:105px;top:89.8px;width:16px;height:8.6px;font-size:7.6px">环境</span><span style="left:135.8px;top:89.8px;width:16px;height:8.6px;font-size:7.6px">背景</span><span style="left:163px;top:89.8px;width:23.6px;height:8.6px;font-size:7.6px">收藏夹</span><span style="left:197.5px;top:89.8px;width:16px;height:8.6px;font-size:7.6px">模型</span><span style="left:17px;top:126.01px;width:16.6px;height:8.8px;font-size:7.8px">下载</span><span style="left:23.8px;top:278.74px;width:25px;height:9px;font-size:8px">自定义</span><span style="left:230.4px;top:67.5px;width:29.18px;height:7.6px;font-size:6.6px">每秒帧数:</span><span style="left:230.4px;top:75.35px;width:15.98px;height:7.6px;font-size:6.6px">时间:</span><span style="left:230.4px;top:83.2px;width:22.58px;height:7.6px;font-size:6.6px">采样值:</span><span style="left:230.4px;top:91.05px;width:22.58px;height:7.6px;font-size:6.6px">三角形:</span><span style="left:230.4px;top:106.75px;width:15.98px;height:7.6px;font-size:6.6px">资源:</span><span style="left:230.4px;top:114.6px;width:15.98px;height:7.6px;font-size:6.6px">焦距:</span><span style="left:230.4px;top:122.45px;width:15.98px;height:7.6px;font-size:6.6px">去噪:</span><span style="left:296.4px;top:122.45px;width:7.6px;height:7.6px;font-size:6.6px">关</span><span style="left:713.6px;top:473.2px;width:65.4px;height:8.6px;font-size:7.6px">KeyShot 保存提醒</span><span style="left:710.6px;top:486.8px;width:67.4px;height:8.6px;font-size:7.6px">要立即保存文件吗?</span><span style="left:704.5px;top:502.1px;width:15.8px;height:8.4px;font-size:7.4px">保存</span><span style="left:735px;top:502.1px;width:23.2px;height:8.4px;font-size:7.4px">另存为</span><span style="left:772.9px;top:502.1px;width:15.8px;height:8.4px;font-size:7.4px">取消</span><span style="left:807px;top:66.7px;width:16.6px;height:8.8px;font-size:7.8px">项目</span><span style="left:906.4px;top:66.6px;width:17px;height:9px;font-size:8px">环境</span><span style="left:818.3px;top:89.8px;width:16px;height:8.6px;font-size:7.6px">场景</span><span style="left:853.3px;top:89.8px;width:16px;height:8.6px;font-size:7.6px">材质</span><span style="left:888.5px;top:89.8px;width:16px;height:8.6px;font-size:7.6px">相机</span><span style="left:923.7px;top:89.8px;width:16px;height:8.6px;font-size:7.6px">环境</span><span style="left:958.5px;top:89.8px;width:16px;height:8.6px;font-size:7.6px">照明</span><span style="left:994.1px;top:89.8px;width:16px;height:8.6px;font-size:7.6px">图像</span><span style="left:832px;top:105.7px;width:24.34px;height:9px;font-size:8px">环境 9</span><span style="left:832px;top:118.2px;width:24.34px;height:9px;font-size:8px">环境 2</span><span style="left:876px;top:360.5px;width:16.4px;height:8.4px;font-size:7.4px">设置</span><span style="left:921.4px;top:360.5px;width:44.8px;height:8.4px;font-size:7.4px">HDRI 编辑器</span><span style="left:859px;top:392px;width:24.96px;height:9px;font-size:8px">针 #11</span><span style="left:859px;top:404.7px;width:20.4px;height:9px;font-size:8px">针 #9</span><span style="left:859px;top:417.4px;width:20.4px;height:9px;font-size:8px">针 #8</span><span style="left:859px;top:430.1px;width:20.4px;height:9px;font-size:8px">针 #7</span><span style="left:859px;top:442.8px;width:20.4px;height:9px;font-size:8px">针 #6</span><span style="left:859px;top:455.5px;width:20.4px;height:9px;font-size:8px">针 #5</span><span style="left:859px;top:468.2px;width:20.4px;height:9px;font-size:8px">针 #2</span><span style="left:859px;top:480.9px;width:20.4px;height:9px;font-size:8px">针 #1</span><span style="left:837px;top:493.7px;width:16.6px;height:8.8px;font-size:7.8px">背景</span><span style="left:366.4px;top:545.3px;width:15.8px;height:8.4px;font-size:7.4px">导入</span><span style="left:416.8px;top:545.3px;width:8.4px;height:8.4px;font-size:7.4px">库</span><span style="left:459.6px;top:545.3px;width:15.8px;height:8.4px;font-size:7.4px">项目</span><span style="left:506.2px;top:545.3px;width:15.8px;height:8.4px;font-size:7.4px">动画</span><span style="left:645.8px;top:545.3px;width:15.8px;height:8.4px;font-size:7.4px">渲染</span><span style="left:21.4px;top:544.4px;width:15.4px;height:8.2px;font-size:7.2px">云库</span><span style="left:992.4px;top:545.4px;width:15.4px;height:8.2px;font-size:7.2px">截屏</span><span style="left:952.5px;top:562.9px;width:8px;height:8px;font-size:7px">中</span></div>
<svg id="ov" width="1024" height="576" viewBox="0 0 1024 576">
<circle cx="4.3" cy="5.3" r="3.3" fill="#1f5d9a"/><circle cx="4.3" cy="5.3" r="1.6" fill="#163a5e"/>
<g transform="translate(9.4 7.77) scale(0.931 1)" fill="#161616"><text x="0" y="0" font-family="Liberation Sans, sans-serif" font-size="6.3" textLength="61.98" lengthAdjust="spacingAndGlyphs" xml:space="preserve">KeyShot 9.3 Pro  - CK</text><text x="61.98" y="0" font-family="'Liberation Sans','Noto Sans CJK SC',sans-serif" font-size="6.3" font-weight="500">豆式</text><text x="74.58" y="0" font-family="Liberation Sans, sans-serif" font-size="6.3" textLength="42.02" lengthAdjust="spacingAndGlyphs" xml:space="preserve">-04.bip  - 64 bit</text></g>
<g stroke="#8a8a8a" stroke-width="0.7" fill="none"><path d="M967.5 5.3h4"/><rect x="989" y="3.6" width="3.2" height="3.2"/><path d="M990 3.6v-0.8h3.2v3.2h-1"/><path d="M1010.6 3.3l4 4m0-4l-4 4"/></g>
<g transform="translate(3 20.88) scale(0.982 1)" fill="#f0f0f0"><text x="0" y="0" font-family="'Liberation Sans','Noto Sans CJK SC',sans-serif" font-size="8" font-weight="500">文件</text><text x="16" y="0" font-family="Liberation Sans, sans-serif" font-size="8.2" textLength="10.47" lengthAdjust="spacingAndGlyphs" xml:space="preserve">(F)</text><rect x="18.73" y="0.98" width="5.01" height="0.65"/></g>
<g transform="translate(35.6 20.88) scale(0.954 1)" fill="#f0f0f0"><text x="0" y="0" font-family="'Liberation Sans','Noto Sans CJK SC',sans-serif" font-size="8" font-weight="500">编辑</text><text x="16" y="0" font-family="Liberation Sans, sans-serif" font-size="8.2" textLength="10.93" lengthAdjust="spacingAndGlyphs" xml:space="preserve">(E)</text><rect x="18.73" y="0.98" width="5.47" height="0.65"/></g>
<g transform="translate(68 20.88) scale(0.975 1)" fill="#f0f0f0"><text x="0" y="0" font-family="'Liberation Sans','Noto Sans CJK SC',sans-serif" font-size="8" font-weight="500">环境</text></g>
<g transform="translate(90 20.88) scale(0.968 1)" fill="#f0f0f0"><text x="0" y="0" font-family="'Liberation Sans','Noto Sans CJK SC',sans-serif" font-size="8" font-weight="500">照明</text><text x="16" y="0" font-family="Liberation Sans, sans-serif" font-size="8.2" textLength="10.02" lengthAdjust="spacingAndGlyphs" xml:space="preserve">(L)</text><rect x="18.73" y="0.98" width="4.56" height="0.65"/></g>
<g transform="translate(122.6 20.88) scale(0.964 1)" fill="#f0f0f0"><text x="0" y="0" font-family="'Liberation Sans','Noto Sans CJK SC',sans-serif" font-size="8" font-weight="500">相机</text><text x="16" y="0" font-family="Liberation Sans, sans-serif" font-size="8.2" textLength="11.38" lengthAdjust="spacingAndGlyphs" xml:space="preserve">(C)</text><rect x="18.73" y="0.98" width="5.92" height="0.65"/></g>
<g transform="translate(155.7 20.88) scale(0.981 1)" fill="#f0f0f0"><text x="0" y="0" font-family="'Liberation Sans','Noto Sans CJK SC',sans-serif" font-size="8" font-weight="500">图像</text></g>
<g transform="translate(178 20.88) scale(0.968 1)" fill="#f0f0f0"><text x="0" y="0" font-family="'Liberation Sans','Noto Sans CJK SC',sans-serif" font-size="8" font-weight="500">渲染</text><text x="16" y="0" font-family="Liberation Sans, sans-serif" font-size="8.2" textLength="11.38" lengthAdjust="spacingAndGlyphs" xml:space="preserve">(R)</text><rect x="18.73" y="0.98" width="5.92" height="0.65"/></g>
<g transform="translate(211.4 20.88) scale(0.973 1)" fill="#f0f0f0"><text x="0" y="0" font-family="'Liberation Sans','Noto Sans CJK SC',sans-serif" font-size="8" font-weight="500">查看</text><text x="16" y="0" font-family="Liberation Sans, sans-serif" font-size="8.2" textLength="10.93" lengthAdjust="spacingAndGlyphs" xml:space="preserve">(V)</text><rect x="18.73" y="0.98" width="5.47" height="0.65"/></g>
<g transform="translate(245 20.88) scale(0.988 1)" fill="#f0f0f0"><text x="0" y="0" font-family="'Liberation Sans','Noto Sans CJK SC',sans-serif" font-size="8" font-weight="500">窗口</text></g>
<g transform="translate(268 20.88) scale(0.979 1)" fill="#f0f0f0"><text x="0" y="0" font-family="'Liberation Sans','Noto Sans CJK SC',sans-serif" font-size="8" font-weight="500">帮助</text><text x="16" y="0" font-family="Liberation Sans, sans-serif" font-size="8.2" textLength="11.38" lengthAdjust="spacingAndGlyphs" xml:space="preserve">(H)</text><rect x="18.73" y="0.98" width="5.92" height="0.65"/></g>
<circle cx="942.3" cy="17.6" r="3.4" fill="#d6334c"/>
<g transform="translate(951.8 20.68) scale(1.067 1)" fill="#c22f49"><text x="0" y="0" font-family="'Liberation Sans','Noto Sans CJK SC',sans-serif" font-size="8">已录制</text><text x="24" y="0" font-family="Liberation Sans, sans-serif" font-size="8" textLength="33.36" lengthAdjust="spacingAndGlyphs" xml:space="preserve"> 02:27:29</text></g>
<g transform="translate(9 36.54)" fill="#bdbdbd"><text x="0" y="0" font-family="'Liberation Sans','Noto Sans CJK SC',sans-serif" font-size="7.6">默认</text></g>
<g transform="translate(46.5 36.56) scale(0.978 1)" fill="#b8b8b8"><text x="0" y="0" font-family="Liberation Sans, sans-serif" font-size="7.4" textLength="16.87" lengthAdjust="spacingAndGlyphs" xml:space="preserve">96 %</text></g>
<g transform="translate(344.8 36.64) scale(1.181 1)" fill="#dcdcdc"><text x="0" y="0" font-family="Liberation Serif, sans-serif" font-size="7.6" textLength="17.1" lengthAdjust="spacingAndGlyphs" xml:space="preserve">120.0</text></g>
<path d="M28.5 33l1.6 1.8 1.6-1.8z" fill="#707070"/><path d="M69 33l1.6 1.8 1.6-1.8z" fill="#606060"/>
<g transform="translate(8.5 53.54) scale(0.996 1)" fill="#bcbcbc"><text x="0" y="0" font-family="'Liberation Sans','Noto Sans CJK SC',sans-serif" font-size="7.6">工作区</text></g>
<g transform="translate(39 53.54) scale(1.000 1)" fill="#bcbcbc"><text x="0" y="0" font-family="Liberation Serif, sans-serif" font-size="7.6" textLength="16.68" lengthAdjust="spacingAndGlyphs" xml:space="preserve">CPU </text><text x="16.68" y="0" font-family="'Liberation Sans','Noto Sans CJK SC',sans-serif" font-size="7.6">使用量</text></g>
<g transform="translate(86 53.54) scale(0.961 1)" fill="#bcbcbc"><text x="0" y="0" font-family="'Liberation Sans','Noto Sans CJK SC',sans-serif" font-size="7.6">暂停</text></g>
<g transform="translate(113.2 48.34) scale(0.974 1)" fill="#bcbcbc"><text x="0" y="0" font-family="'Liberation Sans','Noto Sans CJK SC',sans-serif" font-size="7.6">性能</text></g>
<g transform="translate(113.2 57.94) scale(0.974 1)" fill="#bcbcbc"><text x="0" y="0" font-family="'Liberation Sans','Noto Sans CJK SC',sans-serif" font-size="7.6">模式</text></g>
<g transform="translate(139.8 53.54) scale(0.802 1)" fill="#bcbcbc"><text x="0" y="0" font-family="Liberation Serif, sans-serif" font-size="7.6" textLength="15.2" lengthAdjust="spacingAndGlyphs" xml:space="preserve">GPU</text></g>
<g transform="translate(164.5 53.54) scale(0.954 1)" fill="#bcbcbc"><text x="0" y="0" font-family="'Liberation Sans','Noto Sans CJK SC',sans-serif" font-size="7.6">去噪</text></g>
<g transform="translate(193.3 48.34) scale(0.987 1)" fill="#bcbcbc"><text x="0" y="0" font-family="'Liberation Sans','Noto Sans CJK SC',sans-serif" font-size="7.6">渲染</text></g>
<g transform="translate(190.8 57.94) scale(0.789 1)" fill="#bcbcbc"><text x="0" y="0" font-family="Liberation Serif, sans-serif" font-size="7.6" textLength="25.34" lengthAdjust="spacingAndGlyphs" xml:space="preserve">NURBS</text></g>
<g transform="translate(222.6 53.54) scale(1.026 1)" fill="#bcbcbc"><text x="0" y="0" font-family="'Liberation Sans','Noto Sans CJK SC',sans-serif" font-size="7.6">区域</text></g>
<g transform="translate(252.4 53.54) scale(0.987 1)" fill="#e8e8e8"><text x="0" y="0" font-family="'Liberation Sans','Noto Sans CJK SC',sans-serif" font-size="7.6">翻滚</text></g>
<g transform="translate(280 53.54) scale(0.974 1)" fill="#bcbcbc"><text x="0" y="0" font-family="'Liberation Sans','Noto Sans CJK SC',sans-serif" font-size="7.6">平移</text></g>
<g transform="translate(307 53.54) scale(1.000 1)" fill="#bcbcbc"><text x="0" y="0" font-family="'Liberation Sans','Noto Sans CJK SC',sans-serif" font-size="7.6">推移</text></g>
<g transform="translate(341 53.54) scale(0.987 1)" fill="#bcbcbc"><text x="0" y="0" font-family="'Liberation Sans','Noto Sans CJK SC',sans-serif" font-size="7.6">视角</text></g>
<g transform="translate(374.8 48.34) scale(0.987 1)" fill="#bcbcbc"><text x="0" y="0" font-family="'Liberation Sans','Noto Sans CJK SC',sans-serif" font-size="7.6">添加</text></g>
<g transform="translate(374.8 57.94) scale(0.987 1)" fill="#bcbcbc"><text x="0" y="0" font-family="'Liberation Sans','Noto Sans CJK SC',sans-serif" font-size="7.6">相机</text></g>
<g transform="translate(403 49.14) scale(0.987 1)" fill="#bcbcbc"><text x="0" y="0" font-family="'Liberation Sans','Noto Sans CJK SC',sans-serif" font-size="7.6">切换</text></g>
<g transform="translate(403 58.94) scale(0.987 1)" fill="#bcbcbc"><text x="0" y="0" font-family="'Liberation Sans','Noto Sans CJK SC',sans-serif" font-size="7.6">相机</text></g>
<g transform="translate(432.8 48.34) scale(0.934 1)" fill="#5a5a5a"><text x="0" y="0" font-family="'Liberation Sans','Noto Sans CJK SC',sans-serif" font-size="7.6">重置</text></g>
<g transform="translate(432.8 57.94) scale(0.934 1)" fill="#5a5a5a"><text x="0" y="0" font-family="'Liberation Sans','Noto Sans CJK SC',sans-serif" font-size="7.6">相机</text></g>
<g transform="translate(459.8 48.34) scale(0.934 1)" fill="#bcbcbc"><text x="0" y="0" font-family="'Liberation Sans','Noto Sans CJK SC',sans-serif" font-size="7.6">锁定</text></g>
<g transform="translate(459.8 57.94) scale(0.934 1)" fill="#bcbcbc"><text x="0" y="0" font-family="'Liberation Sans','Noto Sans CJK SC',sans-serif" font-size="7.6">相机</text></g>
<g transform="translate(488.5 53.54) scale(1.009 1)" fill="#bcbcbc"><text x="0" y="0" font-family="'Liberation Sans','Noto Sans CJK SC',sans-serif" font-size="7.6">工作室</text></g>
<g transform="translate(528 48.34) scale(0.987 1)" fill="#bcbcbc"><text x="0" y="0" font-family="'Liberation Sans','Noto Sans CJK SC',sans-serif" font-size="7.6">添加</text></g>
<g transform="translate(524 57.94) scale(1.009 1)" fill="#bcbcbc"><text x="0" y="0" font-family="'Liberation Sans','Noto Sans CJK SC',sans-serif" font-size="7.6">工作室</text></g>
<g transform="translate(560.5 48.34) scale(0.987 1)" fill="#5a5a5a"><text x="0" y="0" font-family="'Liberation Sans','Noto Sans CJK SC',sans-serif" font-size="7.6">切换</text></g>
<g transform="translate(557 57.94) scale(0.987 1)" fill="#5a5a5a"><text x="0" y="0" font-family="'Liberation Sans','Noto Sans CJK SC',sans-serif" font-size="7.6">工作室</text></g>
<g transform="translate(592 53.54) scale(0.987 1)" fill="#bcbcbc"><text x="0" y="0" font-family="'Liberation Sans','Noto Sans CJK SC',sans-serif" font-size="7.6">工具</text></g>
<g transform="translate(619.5 48.34) scale(0.987 1)" fill="#e8e8e8"><text x="0" y="0" font-family="'Liberation Sans','Noto Sans CJK SC',sans-serif" font-size="7.6">几何</text></g>
<g transform="translate(619.5 57.94) scale(0.987 1)" fill="#e8e8e8"><text x="0" y="0" font-family="'Liberation Sans','Noto Sans CJK SC',sans-serif" font-size="7.6">视图</text></g>
<g transform="translate(645.8 48.34) scale(1.026 1)" fill="#bcbcbc"><text x="0" y="0" font-family="'Liberation Sans','Noto Sans CJK SC',sans-serif" font-size="7.6">配置程序</text></g>
<g transform="translate(654 57.94) scale(0.987 1)" fill="#bcbcbc"><text x="0" y="0" font-family="'Liberation Sans','Noto Sans CJK SC',sans-serif" font-size="7.6">向导</text></g>
<g fill="#a8a8a8"><rect x="90.3" y="29" width="2" height="8.2"/><rect x="94" y="29" width="2" height="8.2"/></g>
<g transform="translate(120 33)" fill="none" stroke="#8a8a8a"><circle r="3.6" stroke-width="1.3" stroke-dasharray="2.2 0.7"/><circle r="1.4" stroke-width="0.8"/></g>
<g transform="translate(145.8 33)" fill="none" stroke="#8e8e8e"><rect x="-3" y="-3" width="6" height="6" rx="1" stroke-width="1.1"/><rect x="-1.1" y="-1.1" width="2.2" height="2.2" stroke-width="0.7"/><path d="M-4.4 -1.5h1.2M-4.4 1.5h1.2M3.2 -1.5h1.2M3.2 1.5h1.2M-1.5 -4.4v1.2M1.5 -4.4v1.2M-1.5 3.2v1.2M1.5 3.2v1.2" stroke-width="0.8"/></g>
<defs><radialGradient id="gball" cx="35%" cy="35%" r="75%"><stop offset="0" stop-color="#b0b0b0"/><stop offset="1" stop-color="#5c5c5c"/></radialGradient></defs><circle cx="171.4" cy="33" r="4.5" fill="url(#gball)"/>
<g transform="translate(200.8 33)" fill="none" stroke="#9a9a9a" stroke-width="1"><path d="M-3.6 -3.6C-1 -1 1 -1 3.6 -3.6M-3.6 3.6C-1 1 1 1 3.6 3.6M-3.6 -3.6C-1 -1 -1 1 -3.6 3.6M3.6 -3.6C1 -1 1 1 3.6 3.6" stroke-width="0.8"/><g fill="#9a9a9a" stroke="none"><circle cx="-3.6" cy="-3.6" r="1.1"/><circle cx="3.6" cy="-3.6" r="1.1"/><circle cx="-3.6" cy="3.6" r="1.1"/><circle cx="3.6" cy="3.6" r="1.1"/></g></g>
<g transform="translate(229.5 33)" fill="none" stroke="#6e6e6e"><rect x="-4.4" y="-4.2" width="8.8" height="8.4" stroke-width="1"/><rect x="-1.8" y="-1.4" width="3.6" height="3.2" stroke-width="0.8"/><path d="M-4.4 -2.4h8.8" stroke-width="0.8"/></g>
<g transform="translate(260.2 33.2)" fill="none" stroke="#1f86fa" stroke-width="2.4"><path d="M2.9 -2A3.5 3.5 0 1 0 3.3 1.5"/><path d="M1.2 -4.4h3.4v3.4z" fill="#1466d8" stroke="none"/></g>
<g transform="translate(286.8 33)" stroke="#a6a6a6" stroke-width="1.9" fill="#a6a6a6"><path d="M-2.8 -2.8L2.8 2.8M2.8 -2.8L-2.8 2.8"/><path d="M-4.4 -4.4h3.2l-3.2 3.2zM4.4 -4.4h-3.2l3.2 3.2zM-4.4 4.4h3.2l-3.2 -3.2zM4.4 4.4h-3.2l3.2 -3.2z" stroke="none"/></g>
<g transform="translate(314.2 33)" fill="#909090"><path d="M-1.8 -4.6h3.6v3.8h2.8l-4.6 4.8l-4.6 -4.8h2.8z"/></g>
<g transform="translate(335.5 33)" fill="none" stroke="#808080" stroke-width="0.8"><rect x="-3.6" y="-3" width="7.2" height="6"/><path d="M-3.6 -1h7.2M-1.2 -3v6M1.2 -1v4"/></g>
<g transform="translate(381.8 33)" fill="none" stroke="#7c7c7c" stroke-width="1"><rect x="-3.6" y="-3.2" width="7.2" height="6.4" rx="0.5"/><circle cx="0.2" cy="0" r="1.6"/><path d="M-3.6 -4.3h2.2" stroke-width="0.8"/><circle cx="2.6" cy="3.4" r="0.6" fill="#7c7c7c" stroke="none"/></g>
<g transform="translate(409.3 33)" fill="none" stroke="#7c7c7c" stroke-width="1"><rect x="-3.6" y="-3.2" width="7.2" height="6.4" rx="0.5"/><circle cx="0.2" cy="0" r="1.6"/><path d="M-3.6 -4.3h2.2" stroke-width="0.8"/><circle cx="2.6" cy="3.4" r="0.6" fill="#7c7c7c" stroke="none"/><circle cx="-7.2" cy="0.2" r="0.95" fill="#7c7c7c" stroke="none"/><circle cx="7.2" cy="0.2" r="0.95" fill="#7c7c7c" stroke="none"/></g>
<g transform="translate(439.8 33)" fill="none" stroke="#4e4e4e" stroke-width="1"><rect x="-3.6" y="-3.2" width="7.2" height="6.4" rx="0.5"/><circle cx="0.2" cy="0" r="1.6"/><path d="M-3.6 -4.3h2.2" stroke-width="0.8"/><circle cx="2.6" cy="3.4" r="0.6" fill="#4e4e4e" stroke="none"/></g>
<g transform="translate(466.8 33)" fill="none" stroke="#7c7c7c" stroke-width="1"><rect x="-3.6" y="-3.2" width="7.2" height="6.4" rx="0.5"/><circle cx="0.2" cy="0" r="1.6"/><path d="M-3.6 -4.3h2.2" stroke-width="0.8"/><circle cx="2.6" cy="3.4" r="0.6" fill="#7c7c7c" stroke="none"/><rect x="0.2" y="0.2" width="4.6" height="3.8" fill="#b8b8b8" stroke="#2b2b2b" stroke-width="0.5"/><path d="M1.4 0.2v-1.2a1.1 1.1 0 0 1 2.2 0v1.2" stroke="#b8b8b8" stroke-width="0.8"/></g>
<g transform="translate(499.8 33)" fill="none" stroke="#7c7c7c" stroke-width="0.9"><rect x="-3.8" y="-1.2" width="7.6" height="4.6"/><path d="M-3.8 -1.2l0.4 -2.2l7 -0.6l0.2 1.6z" fill="#7c7c7c" fill-opacity="0.6"/></g>
<g transform="translate(535.8 33)" fill="none" stroke="#7c7c7c" stroke-width="0.9"><rect x="-3.8" y="-1.2" width="7.6" height="4.6"/><path d="M-3.8 -1.2l0.4 -2.2l7 -0.6l0.2 1.6z" fill="#7c7c7c" fill-opacity="0.6"/></g>
<g transform="translate(566.5 33)" fill="none" stroke="#4e4e4e" stroke-width="0.9"><rect x="-3.8" y="-1.2" width="7.6" height="4.6"/><path d="M-3.8 -1.2l0.4 -2.2l7 -0.6l0.2 1.6z" fill="#4e4e4e" fill-opacity="0.6"/><circle cx="-6.8" cy="0" r="0.7" fill="#4e4e4e" stroke="none"/><circle cx="6.8" cy="0" r="0.7" fill="#4e4e4e" stroke="none"/></g>
<g transform="translate(598.8 33)" fill="none" stroke="#a0a0a0" stroke-width="1"><path d="M-3.6 -3.8l3 2.6l3.2 -2.8M-0.6 -1.2v5M-0.6 3.8h3.4"/><circle cx="3" cy="-3.8" r="1" fill="#a0a0a0" stroke="none"/></g>
<g transform="translate(626.5 33)"><path d="M-4.2 -2.6L0 -4.4L4.2 -2.6V1.6C3.4 3.4 1.4 4.6 0 4.6C-1.6 4.6 -3.4 3.4 -4.2 1.6z" fill="#1d7ff5"/><path d="M-1.6 -1L2.6 -1.6V2.2L-0.4 3.4L-1.6 1.6z" fill="#0b3f8a"/></g>
<g transform="translate(661.5 33)" fill="none" stroke="#8c8c8c" stroke-width="0.9"><rect x="-3.4" y="-3.6" width="7.4" height="5.4"/><path d="M-4.6 3.6h6M-4.6 1.4v2.2" /><rect x="-1.4" y="-1.8" width="3.2" height="2" fill="#8c8c8c" stroke="none"/></g>
<g transform="translate(3 73.48)" fill="#f2f2f2"><text x="0" y="0" font-family="'Liberation Sans','Noto Sans CJK SC',sans-serif" font-size="8" font-weight="bold">库</text></g>
<g transform="translate(105 73.48)" fill="#f2f2f2"><text x="0" y="0" font-family="'Liberation Sans','Noto Sans CJK SC',sans-serif" font-size="8" font-weight="bold">纹理</text></g>
<g fill="none" stroke="#c8c8c8"><rect x="203" y="69.2" width="4.2" height="3.2" rx="0.6" stroke-width="0.8"/><path d="M204.4 69.2v-1.2h4.4v3.4h-1" stroke-width="0.8"/><path d="M216.4 68l4.4 4.4m0 -4.4l-4.4 4.4" stroke-width="1.5"/></g>
<g transform="translate(12.5 96.34) scale(0.954 1)" fill="#c0c0c0"><text x="0" y="0" font-family="'Liberation Sans','Noto Sans CJK SC',sans-serif" font-size="7.6">材质</text></g>
<g transform="translate(43 96.34) scale(0.987 1)" fill="#c0c0c0"><text x="0" y="0" font-family="'Liberation Sans','Noto Sans CJK SC',sans-serif" font-size="7.6">颜色</text></g>
<g transform="translate(73.8 96.34) scale(1.026 1)" fill="#c0c0c0"><text x="0" y="0" font-family="'Liberation Sans','Noto Sans CJK SC',sans-serif" font-size="7.6">纹理</text></g>
<g transform="translate(105 96.34) scale(0.987 1)" fill="#c0c0c0"><text x="0" y="0" font-family="'Liberation Sans','Noto Sans CJK SC',sans-serif" font-size="7.6">环境</text></g>
<g transform="translate(135.8 96.34) scale(0.987 1)" fill="#c0c0c0"><text x="0" y="0" font-family="'Liberation Sans','Noto Sans CJK SC',sans-serif" font-size="7.6">背景</text></g>
<g transform="translate(163 96.34) scale(0.991 1)" fill="#c0c0c0"><text x="0" y="0" font-family="'Liberation Sans','Noto Sans CJK SC',sans-serif" font-size="7.6">收藏夹</text></g>
<g transform="translate(197.5 96.34) scale(0.987 1)" fill="#c0c0c0"><text x="0" y="0" font-family="'Liberation Sans','Noto Sans CJK SC',sans-serif" font-size="7.6">模型</text></g>
<g transform="translate(19.8 83.6)" fill="none" stroke="#c0c0c0"><circle cy="-0.6" r="3.2" stroke-width="1.1"/><path d="M-2.6 3.6h5.2" stroke-width="1"/></g>
<g transform="translate(50.6 83.6)" fill="none" stroke="#9a9a9a" stroke-width="0.9"><path d="M-3.6 3.6v-6.4c0 -1 1.4 -1.6 2.2 -0.8l5 5.4c0.6 0.8 0.2 1.8 -0.8 1.8z"/><circle cx="-1.6" cy="1.6" r="0.7"/></g>
<g transform="translate(81.9 83.6)"><rect x="-4.4" y="-4.4" width="8.8" height="8.8" fill="#1b72ee"/><rect x="-0.4" y="-4.4" width="3" height="3" fill="#0a2f6a"/><rect x="-3" y="-1.2" width="3" height="3" fill="#0a2f6a"/><rect x="0.6" y="1.4" width="3.4" height="3" fill="#0a2f6a"/></g>
<g transform="translate(112.5 83.6)" fill="#6e6e6e" stroke="#8a8a8a" stroke-width="0.6"><circle r="4.2"/><ellipse rx="1.8" ry="4.2" fill="none"/><path d="M-4.2 0h8.4" /></g>
<g transform="translate(143.3 83.6)" fill="none" stroke="#9a9a9a" stroke-width="0.9"><rect x="-4.4" y="-3.4" width="8.8" height="6.8"/><path d="M-3.6 2.6l2.4 -3l1.8 2l1.2 -1.2l1.8 2.2z" fill="#a8a8a8" stroke="none"/><circle cx="2.2" cy="-1.4" r="0.8" fill="#a8a8a8" stroke="none"/></g>
<g transform="translate(174.3 83.8)" fill="none" stroke="#9a9a9a" stroke-width="0.9"><path d="M0 -4.4l1.3 2.9l3.1 0.3l-2.3 2.1l0.7 3.1l-2.8 -1.6l-2.8 1.6l0.7 -3.1l-2.3 -2.1l3.1 -0.3z"/></g>
<g transform="translate(205 83.6)" fill="#9a9a9a"><path d="M-1.6 -4.4l2.4 0l2.6 7.6h-7.6z" fill-opacity="0.9"/><circle cx="-2.4" cy="2" r="2" fill="#bdbdbd"/><circle cx="2.4" cy="2.2" r="1.8" fill="#7a7a7a"/></g>
<g fill="none" stroke="#b8b8b8" stroke-width="0.9"><circle cx="10.8" cy="112.2" r="1.9"/><path d="M9.4 113.8l-2 2.2"/></g>
<g transform="translate(192 112.8)" fill="#a8a8a8"><path d="M-4.2 -3.2h3l0.8 1h4.6v1.2h-8.4z"/><path d="M-4.2 -0.4h9l-1.4 3.8h-7.6z"/></g>
<g transform="translate(203.4 112.8)" fill="#a8a8a8"><path d="M-4.2 -3.2h3l0.8 1h4.6v1.2h-8.4z"/><path d="M-4.2 -0.4h9l-1.4 3.8h-7.6z"/></g>
<g transform="translate(214.4 112.8)" fill="none" stroke="#9a9a9a" stroke-width="1.1"><path d="M2.9 -1.4A3.2 3.2 0 0 0 -3 -1M-2.9 1.4A3.2 3.2 0 0 0 3 1"/><path d="M3.8 -3.2v2.6h-2.6zM-3.8 3.2v-2.6h2.6z" fill="#a8a8a8" stroke="none"/></g>
<g transform="translate(17 132.72) skewX(-12)" fill="#f4f4f4"><text x="0" y="0" font-family="'Liberation Sans','Noto Sans CJK SC',sans-serif" font-size="7.8" font-weight="bold">下载</text></g>
<path d="M9.6 129.91h2.4" stroke="#555" stroke-width="0.7"/>
<g transform="translate(15.2 144.7)" fill="#e6e6e6"><text x="0" y="0" font-family="Liberation Sans, sans-serif" font-size="8.5" textLength="33.07" lengthAdjust="spacingAndGlyphs" xml:space="preserve">Textures</text></g>
<path d="M7.6 141.64h2.8" stroke="#777" stroke-width="0.7"/>
<g transform="translate(23.8 156.42)" fill="#ececec"><text x="0" y="0" font-family="Liberation Sans, sans-serif" font-size="8.5" textLength="45.35" lengthAdjust="spacingAndGlyphs" xml:space="preserve">Bump Maps</text></g>
<path d="M16 153.36h3M17.5 151.86v3" stroke="#8a8a8a" stroke-width="0.7"/>
<g transform="translate(23.8 168.15)" fill="#ececec"><text x="0" y="0" font-family="Liberation Sans, sans-serif" font-size="8.5" textLength="43.46" lengthAdjust="spacingAndGlyphs" xml:space="preserve">Color Maps</text></g>
<g transform="translate(23.8 179.87)" fill="#ececec"><text x="0" y="0" font-family="Liberation Sans, sans-serif" font-size="8.5" textLength="74.64" lengthAdjust="spacingAndGlyphs" xml:space="preserve">Displacement Maps</text></g>
<g transform="translate(23.8 191.6)" fill="#ececec"><text x="0" y="0" font-family="Liberation Sans, sans-serif" font-size="8.5" textLength="44.41" lengthAdjust="spacingAndGlyphs" xml:space="preserve">IES Profiles</text></g>
<path d="M16 188.54h3M17.5 187.04v3" stroke="#8a8a8a" stroke-width="0.7"/>
<g transform="translate(23.8 203.32)" fill="#ececec"><text x="0" y="0" font-family="Liberation Sans, sans-serif" font-size="8.5" textLength="25.05" lengthAdjust="spacingAndGlyphs" xml:space="preserve">Labels</text></g>
<g transform="translate(23.8 215.05)" fill="#ececec"><text x="0" y="0" font-family="Liberation Sans, sans-serif" font-size="8.5" textLength="51.96" lengthAdjust="spacingAndGlyphs" xml:space="preserve">Opacity Maps</text></g>
<g transform="translate(23.8 226.77)" fill="#ececec"><text x="0" y="0" font-family="Liberation Sans, sans-serif" font-size="8.5" textLength="38.27" lengthAdjust="spacingAndGlyphs" xml:space="preserve">OpenVDB</text></g>
<g transform="translate(23.8 238.5)" fill="#ececec"><text x="0" y="0" font-family="Liberation Sans, sans-serif" font-size="8.5" textLength="66.15" lengthAdjust="spacingAndGlyphs" xml:space="preserve">Roughness Maps</text></g>
<g transform="translate(23.8 250.22)" fill="#ececec"><text x="0" y="0" font-family="Liberation Sans, sans-serif" font-size="8.5" textLength="56.69" lengthAdjust="spacingAndGlyphs" xml:space="preserve">Specular Maps</text></g>
<g transform="translate(23.8 261.95)" fill="#ececec"><text x="0" y="0" font-family="Liberation Sans, sans-serif" font-size="8.5" textLength="21.26" lengthAdjust="spacingAndGlyphs" xml:space="preserve">Vizoo</text></g>
<g transform="translate(23.8 273.67)" fill="#ececec"><text x="0" y="0" font-family="Liberation Sans, sans-serif" font-size="8.5" textLength="22.2" lengthAdjust="spacingAndGlyphs" xml:space="preserve">Wood</text></g>
<clipPath id="cliptree"><rect x="0" y="270" width="220" height="15.2"/></clipPath><g clip-path="url(#cliptree)"><g transform="translate(23.8 285.62)" fill="#e6e6e6"><text x="0" y="0" font-family="'Liberation Sans','Noto Sans CJK SC',sans-serif" font-size="8">自定义</text></g></g>
<g fill="#9a9a9a"><circle cx="109.6" cy="287.6" r="0.8"/><circle cx="112.8" cy="287.6" r="0.8"/><circle cx="116" cy="287.6" r="0.8"/></g>
<g transform="translate(6.84 335.18)" fill="#f0f0f0"><text x="0" y="0" font-family="Liberation Sans, sans-serif" font-size="8" textLength="36.91" lengthAdjust="spacingAndGlyphs" xml:space="preserve">asphalt_...</text></g>
<g transform="translate(50.87 335.18)" fill="#f0f0f0"><text x="0" y="0" font-family="Liberation Sans, sans-serif" font-size="8" textLength="32.46" lengthAdjust="spacingAndGlyphs" xml:space="preserve">Blurred...</text></g>
<g transform="translate(92.44 335.18)" fill="#f0f0f0"><text x="0" y="0" font-family="Liberation Sans, sans-serif" font-size="8" textLength="32.91" lengthAdjust="spacingAndGlyphs" xml:space="preserve">box_bu...</text></g>
<g transform="translate(137.36 335.18)" fill="#f0f0f0"><text x="0" y="0" font-family="Liberation Sans, sans-serif" font-size="8" textLength="26.68" lengthAdjust="spacingAndGlyphs" xml:space="preserve">brush...</text></g>
<g transform="translate(173.95 335.18)" fill="#f0f0f0"><text x="0" y="0" font-family="Liberation Sans, sans-serif" font-size="8" textLength="36.9" lengthAdjust="spacingAndGlyphs" xml:space="preserve">Cast_Iro...</text></g>
<g transform="translate(7.96 381.58)" fill="#f0f0f0"><text x="0" y="0" font-family="Liberation Sans, sans-serif" font-size="8" textLength="34.68" lengthAdjust="spacingAndGlyphs" xml:space="preserve">Cement...</text></g>
<g transform="translate(49.76 381.58)" fill="#f0f0f0"><text x="0" y="0" font-family="Liberation Sans, sans-serif" font-size="8" textLength="34.68" lengthAdjust="spacingAndGlyphs" xml:space="preserve">Concret...</text></g>
<g transform="translate(96.23 381.58)" fill="#f0f0f0"><text x="0" y="0" font-family="Liberation Sans, sans-serif" font-size="8" textLength="25.34" lengthAdjust="spacingAndGlyphs" xml:space="preserve">crackle</text></g>
<g transform="translate(133.58 381.58)" fill="#f0f0f0"><text x="0" y="0" font-family="Liberation Sans, sans-serif" font-size="8" textLength="34.23" lengthAdjust="spacingAndGlyphs" xml:space="preserve">Diamon...</text></g>
<g transform="translate(175.28 381.58)" fill="#f0f0f0"><text x="0" y="0" font-family="Liberation Sans, sans-serif" font-size="8" textLength="34.23" lengthAdjust="spacingAndGlyphs" xml:space="preserve">Diamon...</text></g>
<g transform="translate(14.41 427.88)" fill="#f0f0f0"><text x="0" y="0" font-family="Liberation Sans, sans-serif" font-size="8" textLength="21.79" lengthAdjust="spacingAndGlyphs" xml:space="preserve">fragile</text></g>
<g transform="translate(55.32 427.88)" fill="#f0f0f0"><text x="0" y="0" font-family="Liberation Sans, sans-serif" font-size="8" textLength="23.56" lengthAdjust="spacingAndGlyphs" xml:space="preserve">friction</text></g>
<g transform="translate(90.89 427.88)" fill="#f0f0f0"><text x="0" y="0" font-family="Liberation Sans, sans-serif" font-size="8" textLength="36.02" lengthAdjust="spacingAndGlyphs" xml:space="preserve">galvaniz...</text></g>
<g transform="translate(133.36 427.88)" fill="#f0f0f0"><text x="0" y="0" font-family="Liberation Sans, sans-serif" font-size="8" textLength="34.68" lengthAdjust="spacingAndGlyphs" xml:space="preserve">Gravel_...</text></g>
<g transform="translate(176.61 427.88)" fill="#f0f0f0"><text x="0" y="0" font-family="Liberation Sans, sans-serif" font-size="8" textLength="31.57" lengthAdjust="spacingAndGlyphs" xml:space="preserve">herring...</text></g>
<g transform="translate(11.29 474.28)" fill="#f0f0f0"><text x="0" y="0" font-family="Liberation Sans, sans-serif" font-size="8" textLength="28.02" lengthAdjust="spacingAndGlyphs" xml:space="preserve">hocke...</text></g>
<g transform="translate(49.98 474.28)" fill="#f0f0f0"><text x="0" y="0" font-family="Liberation Sans, sans-serif" font-size="8" textLength="34.23" lengthAdjust="spacingAndGlyphs" xml:space="preserve">Horizon...</text></g>
<g transform="translate(92.45 474.28)" fill="#f0f0f0"><text x="0" y="0" font-family="Liberation Sans, sans-serif" font-size="8" textLength="32.91" lengthAdjust="spacingAndGlyphs" xml:space="preserve">knurl_n...</text></g>
<g transform="translate(132.47 474.28)" fill="#f0f0f0"><text x="0" y="0" font-family="Liberation Sans, sans-serif" font-size="8" textLength="36.46" lengthAdjust="spacingAndGlyphs" xml:space="preserve">mesh_ci...</text></g>
<g transform="translate(181.95 474.28)" fill="#f0f0f0"><text x="0" y="0" font-family="Liberation Sans, sans-serif" font-size="8" textLength="20.89" lengthAdjust="spacingAndGlyphs" xml:space="preserve">milled</text></g>
<path d="M0.6 395.4h5.2M0.6 397.8h5.2M0.6 400.2h5.2" stroke="#d8d8d8" stroke-width="0.8"/>
<g stroke="#8a8a8a" stroke-width="0.9"><path d="M5.6 508h5.2M5.6 510.2h5.2M5.6 512.4h5.2"/></g>
<g fill="#1a62c8"><rect x="15" y="507.2" width="2.8" height="2.8"/><rect x="18.6" y="507.2" width="2.8" height="2.8"/><rect x="15" y="510.8" width="2.8" height="2.8"/><rect x="18.6" y="510.8" width="2.8" height="2.8"/></g>
<g fill="none" stroke="#909090" stroke-width="0.9"><circle cx="33" cy="509.4" r="1.8"/><path d="M31.6 510.8l-1.8 2"/><circle cx="190.6" cy="509.4" r="1.8"/><path d="M189.2 510.8l-1.8 2"/></g>
<circle cx="88" cy="510.4" r="2.6" fill="#8c8c8c"/>
<g transform="translate(204 510.4)" fill="none" stroke="#909090" stroke-width="0.9"><path d="M-3 1.6a2 2 0 0 1 0.4 -3.8a2.8 2.8 0 0 1 5.2 0a2 2 0 0 1 0.4 3.8z"/><path d="M0 3.4v-3.4M-1.4 1.2l1.4 -1.4l1.4 1.4"/></g>
<g transform="translate(216 510.6)" fill="#909090"><path d="M-4.2 -3.2h3l0.8 1h4.6v1.2h-8.4z"/><path d="M-4.2 -0.4h9l-1.4 3.8h-7.6z"/></g>
<g transform="translate(230.4 73.18)" fill="#141414" opacity="0.95"><text x="0" y="0" font-family="'Liberation Serif','Noto Serif CJK SC',serif" font-size="6.6">每秒帧数</text><text x="26.4" y="0" font-family="Liberation Serif, sans-serif" font-size="6.4" xml:space="preserve">:</text></g>
<g transform="translate(287.48 73.18)" fill="#141414" opacity="0.95"><text x="0" y="0" font-family="Liberation Serif, sans-serif" font-size="6.9" textLength="15.53" lengthAdjust="spacingAndGlyphs" xml:space="preserve">716.3</text></g>
<g transform="translate(230.4 81.03)" fill="#141414" opacity="0.95"><text x="0" y="0" font-family="'Liberation Serif','Noto Serif CJK SC',serif" font-size="6.6">时间</text><text x="13.2" y="0" font-family="Liberation Serif, sans-serif" font-size="6.4" xml:space="preserve">:</text></g>
<g transform="translate(296.86 81.03)" fill="#141414" opacity="0.95"><text x="0" y="0" font-family="Liberation Serif, sans-serif" font-size="6.9" textLength="6.14" lengthAdjust="spacingAndGlyphs" xml:space="preserve">7s</text></g>
<g transform="translate(230.4 88.88)" fill="#141414" opacity="0.95"><text x="0" y="0" font-family="'Liberation Serif','Noto Serif CJK SC',serif" font-size="6.6">采样值</text><text x="19.8" y="0" font-family="Liberation Serif, sans-serif" font-size="6.4" xml:space="preserve">:</text></g>
<g transform="translate(296.1 88.88)" fill="#141414" opacity="0.95"><text x="0" y="0" font-family="Liberation Serif, sans-serif" font-size="6.9" textLength="6.9" lengthAdjust="spacingAndGlyphs" xml:space="preserve">35</text></g>
<g transform="translate(230.4 96.73)" fill="#141414" opacity="0.95"><text x="0" y="0" font-family="'Liberation Serif','Noto Serif CJK SC',serif" font-size="6.6">三角形</text><text x="19.8" y="0" font-family="Liberation Serif, sans-serif" font-size="6.4" xml:space="preserve">:</text></g>
<g transform="translate(275.4 96.73)" fill="#141414" opacity="0.95"><text x="0" y="0" font-family="Liberation Serif, sans-serif" font-size="6.9" textLength="27.6" lengthAdjust="spacingAndGlyphs" xml:space="preserve">1,272,671</text></g>
<g transform="translate(230.4 104.58) scale(0.779 1)" fill="#141414" opacity="0.95"><text x="0" y="0" font-family="Liberation Serif, sans-serif" font-size="6.4" textLength="23.12" lengthAdjust="spacingAndGlyphs" xml:space="preserve">NURBS:</text></g>
<g transform="translate(287.48 104.58)" fill="#141414" opacity="0.95"><text x="0" y="0" font-family="Liberation Serif, sans-serif" font-size="6.9" textLength="15.52" lengthAdjust="spacingAndGlyphs" xml:space="preserve">6,580</text></g>
<g transform="translate(230.4 112.43)" fill="#141414" opacity="0.95"><text x="0" y="0" font-family="'Liberation Serif','Noto Serif CJK SC',serif" font-size="6.6">资源</text><text x="13.2" y="0" font-family="Liberation Serif, sans-serif" font-size="6.4" xml:space="preserve">:</text></g>
<g transform="translate(268.5 112.43)" fill="#141414" opacity="0.95"><text x="0" y="0" font-family="Liberation Serif, sans-serif" font-size="6.9" textLength="34.5" lengthAdjust="spacingAndGlyphs" xml:space="preserve">1800 x 1600</text></g>
<g transform="translate(230.4 120.28)" fill="#141414" opacity="0.95"><text x="0" y="0" font-family="'Liberation Serif','Noto Serif CJK SC',serif" font-size="6.6">焦距</text><text x="13.2" y="0" font-family="Liberation Serif, sans-serif" font-size="6.4" xml:space="preserve">:</text></g>
<g transform="translate(287.48 120.28)" fill="#141414" opacity="0.95"><text x="0" y="0" font-family="Liberation Serif, sans-serif" font-size="6.9" textLength="15.53" lengthAdjust="spacingAndGlyphs" xml:space="preserve">120.0</text></g>
<g transform="translate(230.4 128.13)" fill="#141414" opacity="0.95"><text x="0" y="0" font-family="'Liberation Serif','Noto Serif CJK SC',serif" font-size="6.6">去噪</text><text x="13.2" y="0" font-family="Liberation Serif, sans-serif" font-size="6.4" xml:space="preserve">:</text></g>
<g transform="translate(296.4 128.13)" fill="#141414" opacity="0.95"><text x="0" y="0" font-family="'Liberation Serif','Noto Serif CJK SC',serif" font-size="6.6">关</text></g>
<g transform="translate(713.6 479.74) scale(1.080 1)" fill="#d6d6d6"><text x="0" y="0" font-family="Liberation Serif, sans-serif" font-size="7.8" textLength="29.25" lengthAdjust="spacingAndGlyphs" xml:space="preserve">KeyShot </text><text x="29.25" y="0" font-family="'Liberation Serif','Noto Serif CJK SC',serif" font-size="7.6">保存提醒</text></g>
<g transform="translate(710.6 493.34) scale(1.035 1)" fill="#d6d6d6"><text x="0" y="0" font-family="'Liberation Serif','Noto Serif CJK SC',serif" font-size="7.6">要立即保存文件吗</text><text x="60.8" y="0" font-family="Liberation Serif, sans-serif" font-size="7.6" xml:space="preserve">?</text></g>
<g transform="translate(704.5 508.46)" fill="#cfcfcf"><text x="0" y="0" font-family="'Liberation Serif','Noto Serif CJK SC',serif" font-size="7.4">保存</text></g>
<g transform="translate(735 508.46)" fill="#cfcfcf"><text x="0" y="0" font-family="'Liberation Serif','Noto Serif CJK SC',serif" font-size="7.4">另存为</text></g>
<g transform="translate(772.9 508.46)" fill="#cfcfcf"><text x="0" y="0" font-family="'Liberation Serif','Noto Serif CJK SC',serif" font-size="7.4">取消</text></g>
<g transform="translate(807 73.41)" fill="#ededed"><text x="0" y="0" font-family="'Liberation Sans','Noto Sans CJK SC',sans-serif" font-size="7.8" font-weight="500">项目</text></g>
<g transform="translate(906.4 73.48)" fill="#f2f2f2"><text x="0" y="0" font-family="'Liberation Sans','Noto Sans CJK SC',sans-serif" font-size="8" font-weight="bold">环境</text></g>
<g fill="none" stroke="#c8c8c8"><rect x="1001.6" y="69.2" width="4.2" height="3.2" rx="0.6" stroke-width="0.8"/><path d="M1003 69.2v-1.2h4.4v3.4h-1" stroke-width="0.8"/><path d="M1014.4 68l4.4 4.4m0 -4.4l-4.4 4.4" stroke-width="1.5"/></g>
<g transform="translate(818.3 96.34) scale(0.987 1)" fill="#c0c0c0"><text x="0" y="0" font-family="'Liberation Sans','Noto Sans CJK SC',sans-serif" font-size="7.6">场景</text></g>
<g transform="translate(853.3 96.34) scale(0.987 1)" fill="#c0c0c0"><text x="0" y="0" font-family="'Liberation Sans','Noto Sans CJK SC',sans-serif" font-size="7.6">材质</text></g>
<g transform="translate(888.5 96.34) scale(0.987 1)" fill="#c0c0c0"><text x="0" y="0" font-family="'Liberation Sans','Noto Sans CJK SC',sans-serif" font-size="7.6">相机</text></g>
<g transform="translate(923.7 96.34) scale(0.987 1)" fill="#c0c0c0"><text x="0" y="0" font-family="'Liberation Sans','Noto Sans CJK SC',sans-serif" font-size="7.6">环境</text></g>
<g transform="translate(958.5 96.34) scale(0.987 1)" fill="#c0c0c0"><text x="0" y="0" font-family="'Liberation Sans','Noto Sans CJK SC',sans-serif" font-size="7.6">照明</text></g>
<g transform="translate(994.1 96.34) scale(0.987 1)" fill="#c0c0c0"><text x="0" y="0" font-family="'Liberation Sans','Noto Sans CJK SC',sans-serif" font-size="7.6">图像</text></g>
<g transform="translate(825.8 83.6)" fill="none" stroke="#9a9a9a" stroke-width="0.9"><rect x="-4" y="-4.2" width="8" height="8.4"/><path d="M-1.8 -4.2v8.4M-0.2 -2h2.6M-0.2 0h2.6M-0.2 2h2.6"/></g>
<g transform="translate(860.8 83.6)" fill="none" stroke="#c0c0c0"><circle cy="-0.6" r="3.2" stroke-width="1.1"/><path d="M-2.6 3.6h5.2" stroke-width="1"/></g>
<g transform="translate(896 83.6)" fill="none" stroke="#9a9a9a" stroke-width="0.9"><rect x="-4" y="-3" width="8" height="6.6" rx="0.6"/><circle cy="0.3" r="1.5"/><path d="M-1.4 -3l0.5 -1.2h1.8l0.5 1.2"/></g>
<g transform="translate(931.2 83.6)" fill="#1b6fe0" stroke="#0d3f8c" stroke-width="0.6"><circle r="4.3"/><ellipse rx="1.9" ry="4.3" fill="none"/><path d="M-4.3 0h8.6M-3.6 -2.2h7.2M-3.6 2.2h7.2" fill="none"/></g>
<g transform="translate(966 83.4)" fill="#a8a8a8"><path d="M0 -4.4a3 3 0 0 1 1.8 5.4v1h-3.6v-1a3 3 0 0 1 1.8 -5.4z"/><rect x="-1.3" y="2.6" width="2.6" height="1.6"/></g>
<g transform="translate(1001.6 83.6)" fill="none" stroke="#9a9a9a" stroke-width="0.9"><rect x="-3.4" y="-3.2" width="6.8" height="6.4"/><path d="M-4.8 -3.2h1.4M3.4 -3.2h1.4M-4.8 3.2h1.4M3.4 3.2h1.4M-3.4 -4.6v1.4M3.4 -4.6v1.4M-3.4 3.2v1.4M3.4 3.2v1.4"/></g>
<circle cx="825" cy="109.8" r="3.8" fill="#5c5954"/><circle cx="825" cy="109.8" r="2" fill="#4a4742"/>
<circle cx="825" cy="122.4" r="3.9" fill="#0d55c8"/>
<g transform="translate(832 112.58)" fill="#f0f0f0"><text x="0" y="0" font-family="'Liberation Sans','Noto Sans CJK SC',sans-serif" font-size="8" font-weight="500">环境</text><text x="16" y="0" font-family="Liberation Sans, sans-serif" font-size="8.8" xml:space="preserve"> 9</text></g>
<g transform="translate(832 125.08)" fill="#f0f0f0"><text x="0" y="0" font-family="'Liberation Sans','Noto Sans CJK SC',sans-serif" font-size="8" font-weight="500">环境</text><text x="16" y="0" font-family="Liberation Sans, sans-serif" font-size="8.8" xml:space="preserve"> 2</text></g>
<g transform="translate(1014.8 110.2) scale(0.88)"><rect x="-2.4" y="-0.6" width="4.8" height="3.6" fill="#b4b4b4"/><path d="M0.2 -0.6v-1.4a1.1 1.1 0 0 1 2.2 0v0.6" fill="none" stroke="#b4b4b4" stroke-width="0.8"/></g>
<g transform="translate(1014.8 122.8) scale(0.88)"><rect x="-2.4" y="-0.6" width="4.8" height="3.6" fill="#b4b4b4"/><path d="M0.2 -0.6v-1.4a1.1 1.1 0 0 1 2.2 0v0.6" fill="none" stroke="#b4b4b4" stroke-width="0.8"/></g>
<circle cx="812" cy="108" r="3.6" fill="#666"/><path d="M809.6 106.4l4 3" stroke="#888" stroke-width="0.7"/>
<g transform="translate(812 122)" fill="none" stroke="#6c6c6c" stroke-width="0.9"><circle r="3.2"/><path d="M-1.4 -0.6h2.8v2h-2.8z"/></g>
<g transform="translate(812 135.8)" fill="none" stroke="#6c6c6c" stroke-width="0.9"><rect x="-3.4" y="-2.8" width="5" height="4.2"/><rect x="-1.2" y="-0.8" width="4.6" height="4"/></g>
<g transform="translate(812 149.8)" fill="#6c6c6c"><rect x="-2.8" y="-2" width="5.6" height="5.6"/><rect x="-3.4" y="-3.6" width="6.8" height="1.1"/></g>
<g fill="#a0a0a0"><circle cx="910.6" cy="250" r="0.8"/><circle cx="913.8" cy="250" r="0.8"/><circle cx="917" cy="250" r="0.8"/></g>
<g fill="#a0a0a0"><circle cx="910.6" cy="354.6" r="0.8"/><circle cx="913.8" cy="354.6" r="0.8"/><circle cx="917" cy="354.6" r="0.8"/></g>
<g transform="translate(876 366.86) scale(1.041 1)" fill="#c8c8c8"><text x="0" y="0" font-family="'Liberation Serif','Noto Serif CJK SC',serif" font-size="7.4">设置</text></g>
<g transform="translate(921.4 366.86) scale(1.026 1)" fill="#d0d0d0"><text x="0" y="0" font-family="Liberation Serif, sans-serif" font-size="7.6" textLength="20.48" lengthAdjust="spacingAndGlyphs" xml:space="preserve">HDRI </text><text x="20.48" y="0" font-family="'Liberation Serif','Noto Serif CJK SC',serif" font-size="7.4">编辑器</text></g>
<g transform="translate(862.3 380.6)" fill="none" stroke="#b0b0b0" stroke-width="0.8"><circle r="3.9"/><path d="M0 -2.2v3.4M-1.2 -0.4l1.2 1.6l1.2 -1.6" /><circle cy="-1.6" r="0.9" fill="#b0b0b0" stroke="none"/></g>
<g transform="translate(873.7 380.6)" fill="none" stroke="#b0b0b0" stroke-width="0.8"><circle r="3.9"/><path d="M0 -2.4v3.6M-1.6 -0.2l1.6 1.8l1.6 -1.8M-1.8 2.2h3.6"/></g>
<g transform="translate(884.7 380.6)" fill="none" stroke="#b0b0b0" stroke-width="0.9"><rect x="-3.8" y="-3.8" width="7.6" height="7.6"/><path d="M0 -2v3.4M-1.2 -0.2l1.2 1.6l1.2 -1.6"/></g>
<g transform="translate(895.6 380.6)" fill="none" stroke="#8a8a8a" stroke-width="0.8" stroke-dasharray="1.6 0.8"><circle r="3.9"/></g><path d="M895.6 378.4v3.4M894.4 380.4l1.2 1.6l1.2 -1.6" stroke="#8a8a8a" stroke-width="0.8" fill="none"/>
<g transform="translate(909.4 380.8)" fill="none" stroke="#b0b0b0" stroke-width="0.9"><path d="M-1.4 -2h-2.2v5h6.4v-2"/><path d="M-1.2 1c0.2 -2 1.6 -3 3.2 -3" /><path d="M1.4 -4l2.6 2l-2.6 2z" fill="#b0b0b0" stroke="none"/></g>
<g transform="translate(921 380.6)" fill="none" stroke="#555" stroke-width="0.8" stroke-dasharray="1.4 0.9"><circle r="3.2"/></g>
<g transform="translate(932.4 380.8)" fill="none" stroke="#b0b0b0" stroke-width="0.9"><ellipse cx="-0.4" cy="0.8" rx="3.6" ry="2.8"/><circle cx="2.6" cy="-2.4" r="1.2"/></g>
<g transform="translate(943.3 380.6)" fill="#b0b0b0"><rect x="-4" y="-3.8" width="8" height="6" rx="0.8"/><rect x="-2.6" y="-2.6" width="5.2" height="3" fill="#2b2b2b"/><rect x="-3" y="2.2" width="1.6" height="2"/><rect x="1.4" y="2.2" width="1.6" height="2"/></g>
<g transform="translate(954.2 380.8)" fill="#b0b0b0"><path d="M-4.2 -3.2h3l0.8 1h4.6v1.2h-8.4z"/><path d="M-4.2 -0.4h9l-1.4 3.8h-7.6z"/></g>
<g transform="translate(841 396)" fill="none" stroke="#2f7df0" stroke-width="1"><path d="M2.4 -2.6h-4.8v5.4h5v-2.4"/><path d="M-1 -0.4l1.3 1.5l2.8 -3.4" stroke-width="0.9"/></g>
<circle cx="851.8" cy="396" r="2.3" fill="none" stroke="#8a8a8a" stroke-width="0.8"/>
<g transform="translate(859 398.88)" fill="#f0f0f0"><text x="0" y="0" font-family="'Liberation Sans','Noto Sans CJK SC',sans-serif" font-size="8" font-weight="500">针</text><text x="8" y="0" font-family="Liberation Sans, sans-serif" font-size="8.2" textLength="15.96" lengthAdjust="spacingAndGlyphs" xml:space="preserve"> #11</text></g>
<g transform="translate(1004.4 396.4) scale(0.88)"><rect x="-2.4" y="-0.6" width="4.8" height="3.6" fill="#9c9c9c"/><path d="M0.2 -0.6v-1.4a1.1 1.1 0 0 1 2.2 0v0.6" fill="none" stroke="#9c9c9c" stroke-width="0.8"/></g>
<g transform="translate(841 408.7)" fill="none" stroke="#2f7df0" stroke-width="1"><path d="M2.4 -2.6h-4.8v5.4h5v-2.4"/><path d="M-1 -0.4l1.3 1.5l2.8 -3.4" stroke-width="0.9"/></g>
<circle cx="851.8" cy="408.7" r="2.3" fill="none" stroke="#8a8a8a" stroke-width="0.8"/>
<g transform="translate(859 411.58)" fill="#f0f0f0"><text x="0" y="0" font-family="'Liberation Sans','Noto Sans CJK SC',sans-serif" font-size="8" font-weight="500">针</text><text x="8" y="0" font-family="Liberation Sans, sans-serif" font-size="8.2" textLength="11.4" lengthAdjust="spacingAndGlyphs" xml:space="preserve"> #9</text></g>
<g transform="translate(1004.4 409.1) scale(0.88)"><rect x="-2.4" y="-0.6" width="4.8" height="3.6" fill="#9c9c9c"/><path d="M0.2 -0.6v-1.4a1.1 1.1 0 0 1 2.2 0v0.6" fill="none" stroke="#9c9c9c" stroke-width="0.8"/></g>
<g transform="translate(841 421.4)" fill="none" stroke="#2f7df0" stroke-width="1"><path d="M2.4 -2.6h-4.8v5.4h5v-2.4"/><path d="M-1 -0.4l1.3 1.5l2.8 -3.4" stroke-width="0.9"/></g>
<circle cx="851.8" cy="421.4" r="2.3" fill="none" stroke="#8a8a8a" stroke-width="0.8"/>
<g transform="translate(859 424.28)" fill="#f0f0f0"><text x="0" y="0" font-family="'Liberation Sans','Noto Sans CJK SC',sans-serif" font-size="8" font-weight="500">针</text><text x="8" y="0" font-family="Liberation Sans, sans-serif" font-size="8.2" textLength="11.4" lengthAdjust="spacingAndGlyphs" xml:space="preserve"> #8</text></g>
<g transform="translate(1004.4 421.8) scale(0.88)"><rect x="-2.4" y="-0.6" width="4.8" height="3.6" fill="#9c9c9c"/><path d="M0.2 -0.6v-1.4a1.1 1.1 0 0 1 2.2 0v0.6" fill="none" stroke="#9c9c9c" stroke-width="0.8"/></g>
<g transform="translate(841 434.1)" fill="none" stroke="#2f7df0" stroke-width="1"><path d="M2.4 -2.6h-4.8v5.4h5v-2.4"/><path d="M-1 -0.4l1.3 1.5l2.8 -3.4" stroke-width="0.9"/></g>
<circle cx="851.8" cy="434.1" r="2.3" fill="none" stroke="#8a8a8a" stroke-width="0.8"/>
<g transform="translate(859 436.98)" fill="#f0f0f0"><text x="0" y="0" font-family="'Liberation Sans','Noto Sans CJK SC',sans-serif" font-size="8" font-weight="500">针</text><text x="8" y="0" font-family="Liberation Sans, sans-serif" font-size="8.2" textLength="11.4" lengthAdjust="spacingAndGlyphs" xml:space="preserve"> #7</text></g>
<g transform="translate(1004.4 434.5) scale(0.88)"><rect x="-2.4" y="-0.6" width="4.8" height="3.6" fill="#9c9c9c"/><path d="M0.2 -0.6v-1.4a1.1 1.1 0 0 1 2.2 0v0.6" fill="none" stroke="#9c9c9c" stroke-width="0.8"/></g>
<g transform="translate(841 446.8)" fill="none" stroke="#2f7df0" stroke-width="1"><path d="M2.4 -2.6h-4.8v5.4h5v-2.4"/><path d="M-1 -0.4l1.3 1.5l2.8 -3.4" stroke-width="0.9"/></g>
<circle cx="851.8" cy="446.8" r="2.3" fill="none" stroke="#8a8a8a" stroke-width="0.8"/>
<g transform="translate(859 449.68)" fill="#f0f0f0"><text x="0" y="0" font-family="'Liberation Sans','Noto Sans CJK SC',sans-serif" font-size="8" font-weight="500">针</text><text x="8" y="0" font-family="Liberation Sans, sans-serif" font-size="8.2" textLength="11.4" lengthAdjust="spacingAndGlyphs" xml:space="preserve"> #6</text></g>
<g transform="translate(1004.4 447.2) scale(0.88)"><rect x="-2.4" y="-0.6" width="4.8" height="3.6" fill="#9c9c9c"/><path d="M0.2 -0.6v-1.4a1.1 1.1 0 0 1 2.2 0v0.6" fill="none" stroke="#9c9c9c" stroke-width="0.8"/></g>
<g transform="translate(841 459.5)" fill="none" stroke="#2f7df0" stroke-width="1"><path d="M2.4 -2.6h-4.8v5.4h5v-2.4"/><path d="M-1 -0.4l1.3 1.5l2.8 -3.4" stroke-width="0.9"/></g>
<circle cx="851.8" cy="459.5" r="2.3" fill="none" stroke="#8a8a8a" stroke-width="0.8"/>
<g transform="translate(859 462.38)" fill="#f0f0f0"><text x="0" y="0" font-family="'Liberation Sans','Noto Sans CJK SC',sans-serif" font-size="8" font-weight="500">针</text><text x="8" y="0" font-family="Liberation Sans, sans-serif" font-size="8.2" textLength="11.4" lengthAdjust="spacingAndGlyphs" xml:space="preserve"> #5</text></g>
<g transform="translate(1004.4 459.9) scale(0.88)"><rect x="-2.4" y="-0.6" width="4.8" height="3.6" fill="#9c9c9c"/><path d="M0.2 -0.6v-1.4a1.1 1.1 0 0 1 2.2 0v0.6" fill="none" stroke="#9c9c9c" stroke-width="0.8"/></g>
<g transform="translate(841 472.2)" fill="none" stroke="#2f7df0" stroke-width="1"><path d="M2.4 -2.6h-4.8v5.4h5v-2.4"/><path d="M-1 -0.4l1.3 1.5l2.8 -3.4" stroke-width="0.9"/></g>
<circle cx="851.8" cy="472.2" r="2.3" fill="none" stroke="#8a8a8a" stroke-width="0.8"/>
<g transform="translate(859 475.08)" fill="#f0f0f0"><text x="0" y="0" font-family="'Liberation Sans','Noto Sans CJK SC',sans-serif" font-size="8" font-weight="500">针</text><text x="8" y="0" font-family="Liberation Sans, sans-serif" font-size="8.2" textLength="11.4" lengthAdjust="spacingAndGlyphs" xml:space="preserve"> #2</text></g>
<g transform="translate(1004.4 472.6) scale(0.88)"><rect x="-2.4" y="-0.6" width="4.8" height="3.6" fill="#9c9c9c"/><path d="M0.2 -0.6v-1.4a1.1 1.1 0 0 1 2.2 0v0.6" fill="none" stroke="#9c9c9c" stroke-width="0.8"/></g>
<g transform="translate(841 484.9)" fill="none" stroke="#2f7df0" stroke-width="1"><path d="M2.4 -2.6h-4.8v5.4h5v-2.4"/><path d="M-1 -0.4l1.3 1.5l2.8 -3.4" stroke-width="0.9"/></g>
<circle cx="851.8" cy="484.9" r="2.3" fill="none" stroke="#8a8a8a" stroke-width="0.8"/>
<g transform="translate(859 487.78)" fill="#f0f0f0"><text x="0" y="0" font-family="'Liberation Sans','Noto Sans CJK SC',sans-serif" font-size="8" font-weight="500">针</text><text x="8" y="0" font-family="Liberation Sans, sans-serif" font-size="8.2" textLength="11.4" lengthAdjust="spacingAndGlyphs" xml:space="preserve"> #1</text></g>
<g transform="translate(1004.4 485.3) scale(0.88)"><rect x="-2.4" y="-0.6" width="4.8" height="3.6" fill="#9c9c9c"/><path d="M0.2 -0.6v-1.4a1.1 1.1 0 0 1 2.2 0v0.6" fill="none" stroke="#9c9c9c" stroke-width="0.8"/></g>
<g transform="translate(837 500.41)" fill="#f0f0f0"><text x="0" y="0" font-family="'Liberation Sans','Noto Sans CJK SC',sans-serif" font-size="7.8" font-weight="500">背景</text></g>
<g transform="translate(1004.4 498) scale(0.88)"><rect x="-2.4" y="-0.6" width="4.8" height="3.6" fill="#9c9c9c"/><path d="M0.2 -0.6v-1.4a1.1 1.1 0 0 1 2.2 0v0.6" fill="none" stroke="#9c9c9c" stroke-width="0.8"/></g>
<g transform="translate(817 393.8)" fill="#8a8a8a"><rect x="-2.6" y="-1.8" width="5.2" height="5.2"/><rect x="-3.2" y="-3.4" width="6.4" height="1.1"/></g>
<path d="M817 402.6l3 3.4h-1.8v2.8h-2.4v-2.8h-1.8z" fill="#484848"/>
<path d="M817 419l3 -3.4h-1.8v-2.8h-2.4v2.8h-1.8z" fill="#a0a0a0"/>
<g transform="translate(817 427.2)" fill="#9a9a9a"><path d="M-4.2 -3.2h3l0.8 1h4.6v1.2h-8.4z"/><path d="M-4.2 -0.4h9l-1.4 3.8h-7.6z"/></g>
<g transform="translate(817 438.6)" fill="none" stroke="#8a8a8a"><circle r="2.6" stroke-width="1.4" stroke-dasharray="1.4 0.7"/><circle r="0.8" stroke-width="0.6"/></g>
<g transform="translate(373.8 534.2) scale(1.22)" fill="none" stroke="#505050" stroke-width="1"><circle cx="-1" cy="-0.6" r="5.4"/><path d="M-1 -8v2.4M-1 4.6v2.4M-8.4 -0.6h2.4M4 -0.6h2.4"/><circle cx="3.4" cy="3.6" r="3" fill="#1a1a1a"/><path d="M2.6 2.2l2 1.4l-2 1.4z" fill="#505050" stroke="none"/></g>
<g transform="translate(366.4 551.66)" fill="#4e4e4e"><text x="0" y="0" font-family="'Liberation Sans','Noto Sans CJK SC',sans-serif" font-size="7.4">导入</text></g>
<g transform="translate(420.5 533.8) scale(1.25)" fill="none" stroke="#1559b8" stroke-width="1.05"><path d="M0 -4.6c-2 -1.6 -4.6 -1.8 -7 -1.4v10.6c2.4 -0.4 5 -0.2 7 1.4c2 -1.6 4.6 -1.8 7 -1.4v-10.6c-2.4 -0.4 -5 -0.2 -7 1.4zM0 -4.6v10.6"/></g>
<g transform="translate(416.8 551.66)" fill="#6a6a6a"><text x="0" y="0" font-family="'Liberation Sans','Noto Sans CJK SC',sans-serif" font-size="7.4">库</text></g>
<g transform="translate(467 534) scale(1.3)" fill="none" stroke="#1559b8" stroke-width="1.05"><rect x="-7" y="-6.4" width="14" height="12.6" rx="1"/><path d="M-7 -3.6h14M-4 1h8" /></g>
<g transform="translate(459.6 551.66)" fill="#6a6a6a"><text x="0" y="0" font-family="'Liberation Sans','Noto Sans CJK SC',sans-serif" font-size="7.4">项目</text></g>
<g transform="translate(513 534.2) scale(1.3)" fill="none" stroke="#505050" stroke-width="1"><path d="M-4.6 -4.4a6.4 6.4 0 1 1 -1.6 3"/><path d="M-7.4 -5.4l3 0.4l-0.6 3" /><path d="M-1.6 -2.8l4.6 2.8l-4.6 2.8z" fill="#505050" stroke="none"/></g>
<g transform="translate(506.2 551.66)" fill="#4e4e4e"><text x="0" y="0" font-family="'Liberation Sans','Noto Sans CJK SC',sans-serif" font-size="7.4">动画</text></g>
<g transform="translate(560 533.6) scale(1.2)" fill="none" stroke="#505050" stroke-width="1"><path d="M0 -7l5.4 2.6v5.4l-5.4 2.8l-5.4 -2.8v-5.4zM-5.4 -4.4l5.4 2.6l5.4 -2.6M0 -1.8v5.6"/><path d="M-7.4 2c0.6 3 3.6 5 7.4 5s6.8 -2 7.4 -5" /></g>
<g transform="translate(542.6 551.59) scale(1.028 1)" fill="#4e4e4e"><text x="0" y="0" font-family="Liberation Serif, sans-serif" font-size="7.2" textLength="35.2" lengthAdjust="spacingAndGlyphs" xml:space="preserve">KeyShotXR</text></g>
<g transform="translate(606.5 533.6) scale(1.15)" fill="none" stroke="#343434" stroke-width="1"><ellipse rx="6" ry="7"/><rect x="-5" y="-2" width="10" height="4" rx="1" fill="#303030"/></g>
<g transform="translate(595.81 551.52)" fill="#2c2c2c"><text x="0" y="0" font-family="Liberation Serif, sans-serif" font-size="7" textLength="21.39" lengthAdjust="spacingAndGlyphs" xml:space="preserve">KeyVR</text></g>
<g transform="translate(652 534.2) scale(1.22)" fill="none" stroke="#5a5a5a" stroke-width="1"><path d="M1 5.6h-7.6v-10.4h3l1 -1.6h4.4l1 1.6h3v5"/><circle cx="-0.4" cy="-0.4" r="2.8"/><circle cx="4.4" cy="3.8" r="3.2" fill="#1a1a1a"/><path d="M3 3.8l1 1.1l1.8 -2.2"/></g>
<g transform="translate(645.8 551.66)" fill="#5a5a5a"><text x="0" y="0" font-family="'Liberation Sans','Noto Sans CJK SC',sans-serif" font-size="7.4">渲染</text></g>
<g transform="translate(28.5 533)" fill="none" stroke="#3c3c3c" stroke-width="1"><path d="M-5.6 4.6a3.4 3.4 0 0 1 -0.6 -6.6a5 5 0 0 1 9.4 -1.4a4 4 0 0 1 1.6 7.6z"/><circle cx="-0.6" cy="1" r="3.2"/><circle cx="-0.6" cy="1" r="1.2" fill="#3c3c3c"/></g>
<g transform="translate(21.4 550.59)" fill="#333"><text x="0" y="0" font-family="'Liberation Sans','Noto Sans CJK SC',sans-serif" font-size="7.2">云库</text></g>
<circle cx="697.8" cy="531.9" r="3.3" fill="#121a24" stroke="#cfe0f2" stroke-width="1"/>
<g transform="translate(9 542.14) scale(0.881 1)" fill="#ffffff"><text x="0" y="0" font-family="Liberation Sans, sans-serif" font-size="5.4" font-weight="bold" textLength="18.61" lengthAdjust="spacingAndGlyphs" xml:space="preserve">2:27:29</text></g>
<g transform="translate(999.4 542.14) scale(0.784 1)" fill="#ffffff"><text x="0" y="0" font-family="Liberation Sans, sans-serif" font-size="5.4" font-weight="bold" textLength="18.61" lengthAdjust="spacingAndGlyphs" xml:space="preserve">1:07:16</text></g>
<g fill="none" stroke="#fff" stroke-width="0.9"><path d="M17.4 551.8l-2 1.4h-1.6v2h1.6l2 1.4z" fill="#fff"/><path d="M19 552.8a2 2 0 0 1 0 2.8M20.6 551.6a3.6 3.6 0 0 1 0 5.2"/></g>
<g fill="none" stroke="#fff" stroke-width="0.9"><rect x="35.4" y="551.2" width="8.4" height="5.2" rx="0.8"/><path d="M37 553h5.2M37 554.6h3.6M37 556.4v1.8l1.8 -1.8" /></g>
<g fill="none" stroke="#fff" stroke-width="0.8"><path d="M489.4 555a3 3 0 1 1 5 0"/><path d="M488.4 552.6l0.8 2.4l2 -1.2" /></g><g transform="translate(490.11 557.42)" fill="#fff"><text x="0" y="0" font-family="Liberation Sans, sans-serif" font-size="3.4" font-weight="bold" textLength="3.78" lengthAdjust="spacingAndGlyphs" xml:space="preserve">10</text></g>
<g fill="#fff"><rect x="509.8" y="551" width="1.2" height="6"/><rect x="513" y="551" width="1.2" height="6"/></g>
<g fill="none" stroke="#fff" stroke-width="0.8"><path d="M529.4 555a3 3 0 1 1 5 0"/><path d="M535.4 552.6l-0.8 2.4l-2 -1.2" /></g><g transform="translate(530.11 557.42)" fill="#fff"><text x="0" y="0" font-family="Liberation Sans, sans-serif" font-size="3.4" font-weight="bold" textLength="3.78" lengthAdjust="spacingAndGlyphs" xml:space="preserve">30</text></g>
<g fill="none" stroke="#505050" stroke-width="1" stroke-dasharray="3 2.4"><rect x="990.6" y="525.2" width="13" height="13.4"/></g><circle cx="1002" cy="535" r="2" fill="none" stroke="#4a4a4a" stroke-width="0.8"/>
<g transform="translate(992.4 551.59)" fill="#383838"><text x="0" y="0" font-family="'Liberation Sans','Noto Sans CJK SC',sans-serif" font-size="7.2">截屏</text></g>
<g transform="translate(944.6 553.6) rotate(45)" fill="none" stroke="#f4f4f4" stroke-width="0.9"><rect x="-1.3" y="-4.6" width="2.6" height="7" rx="0.6"/><path d="M-1.3 2.4l1.3 2.2l1.3 -2.2"/></g>
<g fill="none" stroke="#f4f4f4" stroke-width="0.9"><rect x="960.2" y="551.2" width="8.4" height="5.4" rx="0.6"/><rect x="964.2" y="553.6" width="3.4" height="2.2" fill="#f4f4f4"/></g>
<g stroke="#f4f4f4" stroke-width="0.9" fill="#f4f4f4"><path d="M987.6 550.6l-2.4 2.4M981 557l2.4 -2.4" fill="none"/><path d="M984.6 550.8v2.8h2.8zM984 556.8v-2.8h-2.8z" stroke="none"/></g>
<g fill="#f4f4f4"><circle cx="1001.4" cy="554.2" r="0.7"/><circle cx="1004.2" cy="554.2" r="0.7"/><circle cx="1007" cy="554.2" r="0.7"/></g>
<g opacity="0.72">
<g fill="#6a6a6a"><rect x="8" y="563.2" width="2.8" height="2.6"/><rect x="11.4" y="562.8" width="3.2" height="3"/><rect x="8" y="566.4" width="2.8" height="2.6"/><rect x="11.4" y="566.4" width="3.2" height="3"/></g>
<g fill="none" stroke="#4a4a4a" stroke-width="0.9"><circle cx="34" cy="565" r="2.4"/><path d="M32.2 566.8l-2.6 2.8"/></g>
<g fill="none" stroke="#4a4a4a" stroke-width="0.8"><rect x="52.2" y="563.2" width="5.6" height="5.6"/><path d="M59.2 563.6v4.8"/></g>
<rect x="74.6" y="561" width="10.8" height="10.4" rx="1" fill="#0a1622" stroke="#1a4f86" stroke-width="0.9"/><g transform="translate(76.7 568.34)" fill="#1d64a8"><text x="0" y="0" font-family="Liberation Sans, sans-serif" font-size="5.4" font-weight="bold" textLength="6.6" lengthAdjust="spacingAndGlyphs" xml:space="preserve">Ps</text></g>
<g transform="translate(103 566.6)"><path d="M-5.4 -4h4l1 1.2h5.8v7h-10.8z" fill="#d9a83a"/><rect x="-5.4" y="-1" width="10.8" height="5.2" fill="#c49530"/><rect x="-3" y="1" width="6" height="1.4" fill="#7aa7c8"/></g>
<g transform="translate(126 566.4)" fill="none" stroke="#3f7fc2" stroke-width="1.1"><circle r="4.8"/><circle r="2.2" fill="#123e6e"/><path d="M0 -4.8v2.6M4.2 2.4l-2.2 -1.3M-4.2 2.4l2.2 -1.3"/></g>
<g transform="translate(149 566.4)"><circle r="5" fill="#d64a3a"/><path d="M0 0L-4.3 -2.5A5 5 0 0 0 0 5z" fill="#2f9a52"/><path d="M0 0L0 5A5 5 0 0 0 4.3 -2.5z" fill="#e8b83a"/><circle r="2.3" fill="#e8e8e8"/><circle r="1.7" fill="#3f78d8"/></g>
<circle cx="172" cy="566.2" r="5.2" fill="#000"/><rect x="170.6" y="564" width="2.8" height="4.4" fill="#3a3a3a"/>
<rect x="190.4" y="561.2" width="9.6" height="10.2" rx="1.4" fill="#2d527e"/><g transform="translate(193 568.78)" fill="#9cb6d4"><text x="0" y="0" font-family="Liberation Sans, sans-serif" font-size="6.6" font-weight="bold" xml:space="preserve">P</text></g>
<g transform="translate(218 566.4)" fill="none" stroke="#777" stroke-width="0.9"><circle r="4.6"/><path d="M-1.6 1.6l3.2 -3.2M-1.6 1.6l0.4 -2M1.6 -1.6l-0.4 2" /></g>
<rect x="236.6" y="561.2" width="9.6" height="10" fill="#0c3d6c"/><rect x="238.4" y="562.6" width="6" height="4" fill="#1f6db0"/>
<path d="M899.4 567l2 -2l2 2" fill="none" stroke="#5a5a5a" stroke-width="0.8"/>
<rect x="911.6" y="562.4" width="2.6" height="5.6" fill="#777"/><rect x="912.2" y="568" width="1.4" height="1.6" fill="#555"/>
<path d="M921.6 569.4c-0.6 -2.6 1 -3.6 2.4 -6c1.4 2.4 3 3.4 2.4 6z" fill="#b8602a"/>
<g fill="none" stroke="#555" stroke-width="0.8"><rect x="931.6" y="563.4" width="6.4" height="4.6"/><path d="M933.4 569.6h2.8"/></g>
<g fill="none" stroke="#4a4a4a" stroke-width="0.8"><path d="M943.4 565.2h1.2l1.6 -1.4v4.8l-1.6 -1.4h-1.2z"/><path d="M947.4 564.6a2 2 0 0 1 0 3"/></g>
<g transform="translate(952.5 568.92)" fill="#6a6a6a"><text x="0" y="0" font-family="'Liberation Sans','Noto Sans CJK SC',sans-serif" font-size="7">中</text></g>
<g transform="translate(973.6 564.82) scale(1.013 1)" fill="#5e5e5e"><text x="0" y="0" font-family="Liberation Sans, sans-serif" font-size="5.6" textLength="14.01" lengthAdjust="spacingAndGlyphs" xml:space="preserve">22:29</text></g>
<g transform="translate(966 573.22) scale(1.054 1)" fill="#5e5e5e"><text x="0" y="0" font-family="Liberation Sans, sans-serif" font-size="5.6" textLength="28.65" lengthAdjust="spacingAndGlyphs" xml:space="preserve">2020-10-22</text></g>
<g fill="none" stroke="#4e4e4e" stroke-width="0.8"><path d="M1004.4 563h7.2v5.4h-2.6l-1.4 1.6v-1.6h-3.2z"/></g>
</g>
</svg>
</div>
</body></html>
